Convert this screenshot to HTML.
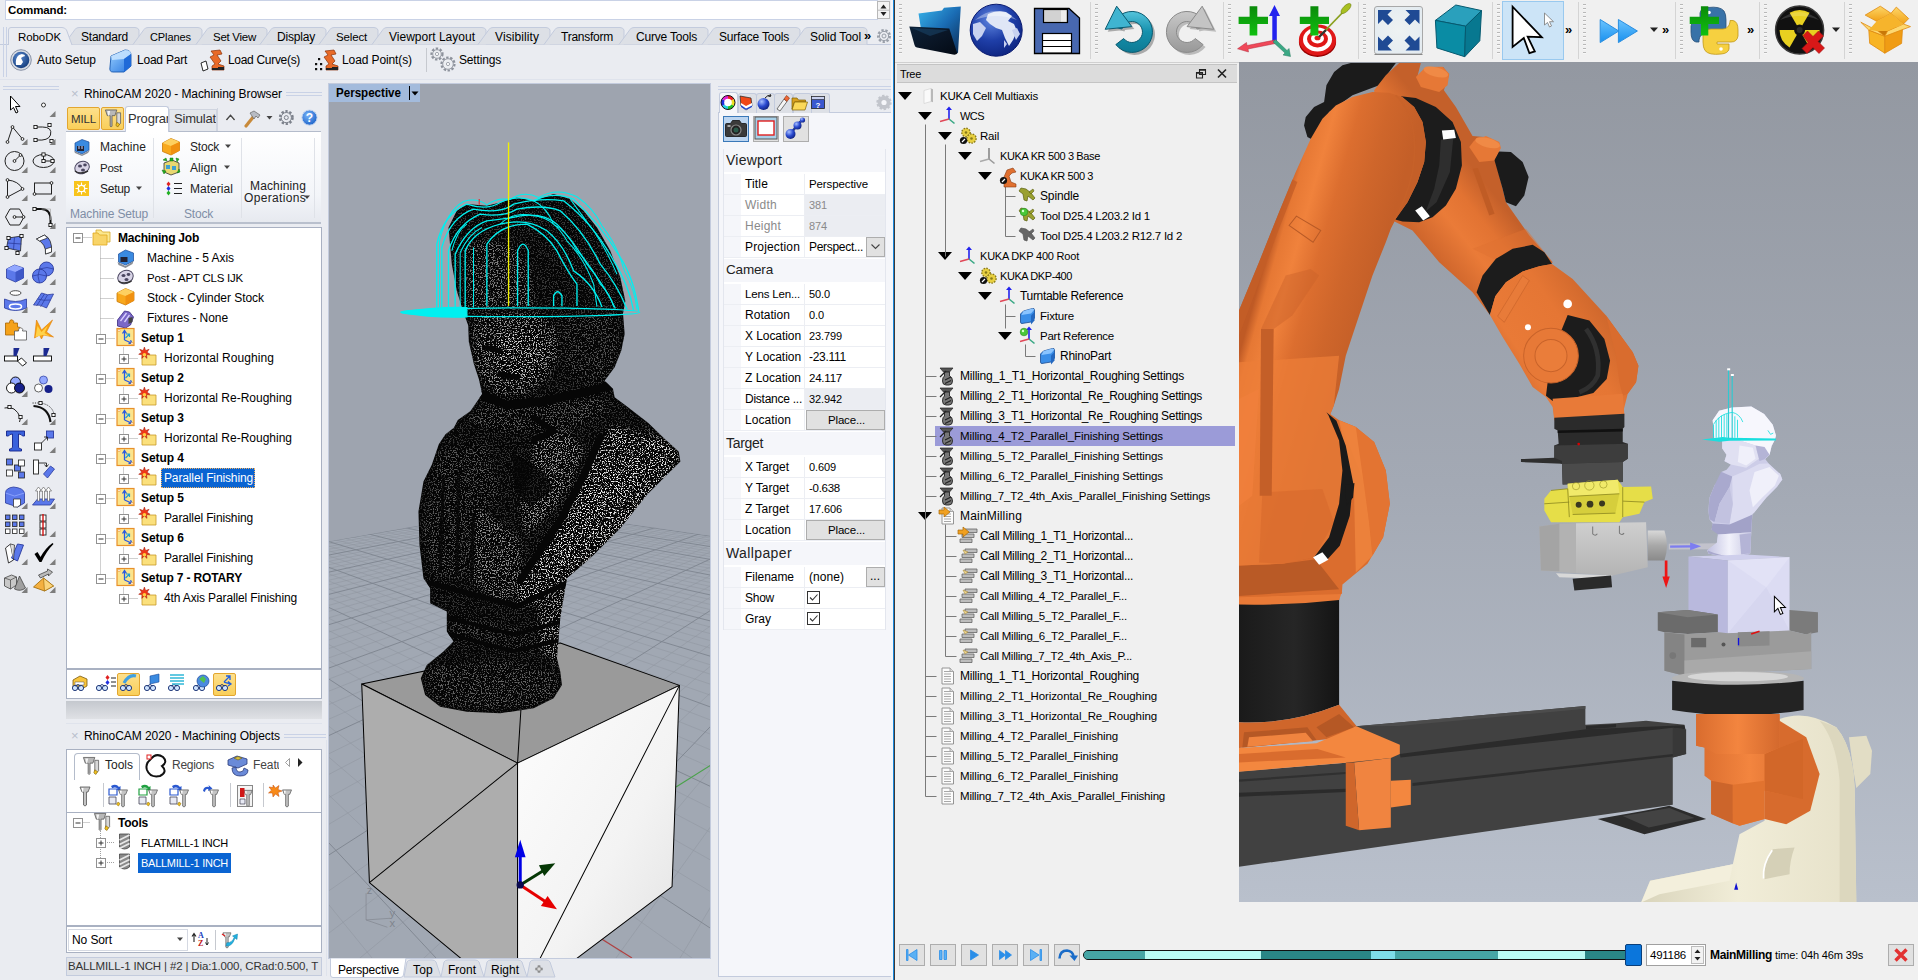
<!DOCTYPE html>
<html><head><meta charset="utf-8"><title>RhinoCAM RoboDK</title>
<style>
html,body{margin:0;padding:0}
body{width:1918px;height:980px;position:relative;overflow:hidden;background:#eaecf1;font-family:"Liberation Sans",sans-serif;font-size:12px;color:#000}
.t{position:absolute;white-space:nowrap;display:block}
.r{position:absolute;display:block}
svg{overflow:hidden}
</style></head><body>
<div class="r" style="left:5px;top:0px;width:873px;height:20px;background:#fff;border:1px solid #c9d2e6;box-sizing:border-box;"></div>
<span class="t" style="left:8px;top:2px;line-height:16px;font-size:11.5px;letter-spacing:-0.132px;font-weight:bold;">Command:</span>
<div class="r" style="left:877px;top:1px;width:13px;height:18px;background:#f4f4f4;border:1px solid #b8b8b8;box-sizing:border-box;"></div>
<svg class="r" style="left:877px;top:1px" width="13" height="18"><path d="M3.5 7.5 L6.5 3.5 L9.5 7.5Z M3.5 11 L6.5 15 L9.5 11Z" fill="#222"/><path d="M1 9.2H12" stroke="#b8b8b8" stroke-width="1"/></svg>
<svg class="r" style="left:0;top:24px" width="893" height="24"><path d="M0 20.5H893" stroke="#c3cbdd" stroke-width="1"/><path d="M64 20.5 L75 5.5 Q76 3.5 79 3.5 L135 3.5 Q138 3.5 139 6 L139 20.5" fill="#dde0e6" stroke="#c3cbdd"/><path d="M133 20.5 L144 5.5 Q145 3.5 148 3.5 L198 3.5 Q201 3.5 202 6 L202 20.5" fill="#dde0e6" stroke="#c3cbdd"/><path d="M196 20.5 L207 5.5 Q208 3.5 211 3.5 L263 3.5 Q266 3.5 267 6 L267 20.5" fill="#dde0e6" stroke="#c3cbdd"/><path d="M260 20.5 L271 5.5 Q272 3.5 275 3.5 L322 3.5 Q325 3.5 326 6 L326 20.5" fill="#dde0e6" stroke="#c3cbdd"/><path d="M319 20.5 L330 5.5 Q331 3.5 334 3.5 L374 3.5 Q377 3.5 378 6 L378 20.5" fill="#dde0e6" stroke="#c3cbdd"/><path d="M372 20.5 L383 5.5 Q384 3.5 387 3.5 L482 3.5 Q485 3.5 486 6 L486 20.5" fill="#dde0e6" stroke="#c3cbdd"/><path d="M478 20.5 L489 5.5 Q490 3.5 493 3.5 L546 3.5 Q549 3.5 550 6 L550 20.5" fill="#dde0e6" stroke="#c3cbdd"/><path d="M544 20.5 L555 5.5 Q556 3.5 559 3.5 L620 3.5 Q623 3.5 624 6 L624 20.5" fill="#dde0e6" stroke="#c3cbdd"/><path d="M619 20.5 L630 5.5 Q631 3.5 634 3.5 L704 3.5 Q707 3.5 708 6 L708 20.5" fill="#dde0e6" stroke="#c3cbdd"/><path d="M702 20.5 L713 5.5 Q714 3.5 717 3.5 L796 3.5 Q799 3.5 800 6 L800 20.5" fill="#dde0e6" stroke="#c3cbdd"/><path d="M793 20.5 L804 5.5 Q805 3.5 808 3.5 L863 3.5 Q866 3.5 867 6 L867 20.5" fill="#dde0e6" stroke="#c3cbdd"/><path d="M8.5 21 L8.5 6 Q8.5 3.5 11 3.5 L62 3.5 Q65 3.5 66.5 6 L72 21" fill="#eaecf1" stroke="#c3cbdd"/></svg>
<span class="t" style="left:18px;top:28.5px;line-height:16px;font-size:11.5px;letter-spacing:-0.078px;">RoboDK</span>
<span class="t" style="left:81px;top:28.5px;line-height:16px;font-size:12px;letter-spacing:-0.213px;">Standard</span>
<span class="t" style="left:150px;top:28.5px;line-height:16px;font-size:11px;letter-spacing:-0.082px;">CPlanes</span>
<span class="t" style="left:213px;top:28.5px;line-height:16px;font-size:11.5px;letter-spacing:-0.272px;">Set View</span>
<span class="t" style="left:277px;top:28.5px;line-height:16px;font-size:12px;letter-spacing:-0.192px;">Display</span>
<span class="t" style="left:336px;top:28.5px;line-height:16px;font-size:11.5px;letter-spacing:-0.160px;">Select</span>
<span class="t" style="left:389px;top:28.5px;line-height:16px;font-size:12px;letter-spacing:0.011px;">Viewport Layout</span>
<span class="t" style="left:495px;top:28.5px;line-height:16px;font-size:12px;letter-spacing:0.088px;">Visibility</span>
<span class="t" style="left:561px;top:28.5px;line-height:16px;font-size:12px;letter-spacing:-0.248px;">Transform</span>
<span class="t" style="left:636px;top:28.5px;line-height:16px;font-size:12px;letter-spacing:-0.194px;">Curve Tools</span>
<span class="t" style="left:719px;top:28.5px;line-height:16px;font-size:12px;letter-spacing:-0.191px;">Surface Tools</span>
<span class="t" style="left:810px;top:28.5px;line-height:16px;font-size:12px;letter-spacing:-0.081px;">Solid Tool</span>
<span class="t" style="left:864px;top:27px;line-height:17px;font-size:13px;font-weight:bold;">»</span>
<span class="t" style="left:37px;top:52px;line-height:16px;font-size:12px;letter-spacing:-0.038px;">Auto Setup</span>
<span class="t" style="left:137px;top:52px;line-height:16px;font-size:12px;letter-spacing:-0.226px;">Load Part</span>
<span class="t" style="left:228px;top:52px;line-height:16px;font-size:12px;letter-spacing:-0.310px;">Load Curve(s)</span>
<span class="t" style="left:342px;top:52px;line-height:16px;font-size:12px;letter-spacing:-0.106px;">Load Point(s)</span>
<span class="t" style="left:459px;top:52px;line-height:16px;font-size:12px;letter-spacing:-0.170px;">Settings</span>
<div class="r" style="left:426px;top:48px;width:1px;height:24px;background:#c6c9cf;"></div>
<div class="r" style="left:3px;top:27px;width:1px;height:50px;background:#c9d2e6;"></div>
<div class="r" style="left:6px;top:27px;width:1px;height:50px;background:#c9d2e6;"></div>
<div class="r" style="left:0px;top:79px;width:893px;height:1px;background:#dfe3ec;"></div>
<div class="r" style="left:3px;top:86px;width:56px;height:1px;background:#c9d2e6;"></div>
<div class="r" style="left:3px;top:89px;width:56px;height:1px;background:#c9d2e6;"></div>
<span class="t" style="left:71px;top:85px;line-height:17px;font-size:13px;color:#b9bfcc;">×</span>
<span class="t" style="left:84px;top:85.5px;line-height:16px;font-size:12px;letter-spacing:-0.083px;">RhinoCAM 2020 - Machining Browser</span>
<div class="r" style="left:286px;top:92px;width:36px;height:1px;background:#c9d2e6;"></div>
<div class="r" style="left:286px;top:95px;width:36px;height:1px;background:#c9d2e6;"></div>
<div class="r" style="left:66px;top:131px;width:255px;height:1px;background:#b4bccb;"></div>
<div class="r" style="left:67px;top:107px;width:33px;height:23px;background:linear-gradient(#fde08c,#f9cf5a);border:1px solid #e3a62f;box-sizing:border-box;border-radius:2px"></div>
<span class="t" style="left:71px;top:111px;line-height:16px;font-size:11.5px;letter-spacing:-0.141px;color:#333;">MILL</span>
<div class="r" style="left:101px;top:107px;width:23px;height:23px;background:linear-gradient(#fde08c,#f9cf5a);border:1px solid #e3a62f;box-sizing:border-box;border-radius:2px"></div>
<div class="r" style="left:125px;top:106px;width:44px;height:26px;background:#fff;border:1px solid #c3cbdd;box-sizing:border-box;border-bottom:none;border-radius:3px 3px 0 0"></div>
<span class="t" style="left:128px;top:111px;width:40px;overflow:hidden;line-height:16px;font-size:13px;color:#333;letter-spacing:-0.2px">Program</span>
<div class="r" style="left:169px;top:109px;width:48px;height:22px;background:#e4e7ec;border:1px solid #d0d5e0;box-sizing:border-box;border-bottom:none"></div>
<span class="t" style="left:174px;top:111px;width:42px;overflow:hidden;line-height:16px;font-size:13px;color:#333;letter-spacing:-0.2px">Simulate</span>
<div class="r" style="left:217px;top:108px;width:1px;height:23px;background:#d0d5e0;"></div>
<div class="r" style="left:66px;top:132px;width:255px;height:91px;background:linear-gradient(#fff,#f3f5f9 70%,#e6e9ef);"></div>
<div class="r" style="left:153px;top:138px;width:1px;height:80px;background:#dfe2e8;"></div>
<div class="r" style="left:241px;top:138px;width:1px;height:80px;background:#dfe2e8;"></div>
<div class="r" style="left:314px;top:138px;width:1px;height:80px;background:#dfe2e8;"></div>
<div class="r" style="left:66px;top:222px;width:255px;height:2px;background:#b9c0cd;"></div>
<span class="t" style="left:100px;top:139px;line-height:16px;font-size:12px;letter-spacing:0.092px;color:#222;">Machine</span>
<span class="t" style="left:100px;top:160px;line-height:16px;font-size:11.5px;letter-spacing:-0.253px;color:#222;">Post</span>
<span class="t" style="left:100px;top:181px;line-height:16px;font-size:12px;letter-spacing:-0.272px;color:#222;">Setup</span>
<span class="t" style="left:190px;top:139px;line-height:16px;font-size:12px;letter-spacing:-0.202px;color:#222;">Stock</span>
<span class="t" style="left:190px;top:160px;line-height:16px;font-size:12px;letter-spacing:0.063px;color:#222;">Align</span>
<span class="t" style="left:190px;top:181px;line-height:16px;font-size:12px;letter-spacing:0.040px;color:#222;">Material</span>
<span class="t" style="left:70px;top:205.5px;line-height:16px;font-size:12px;letter-spacing:-0.158px;color:#7f8ea6;">Machine Setup</span>
<span class="t" style="left:184px;top:205.5px;line-height:16px;font-size:12px;letter-spacing:-0.202px;color:#7f8ea6;">Stock</span>
<span class="t" style="left:250px;top:177.5px;line-height:16px;font-size:12px;letter-spacing:0.145px;color:#222;">Machining</span>
<span class="t" style="left:244px;top:189.5px;line-height:16px;font-size:12px;letter-spacing:0.330px;color:#222;">Operations</span>
<svg class="r" style="left:136px;top:186px" width="7" height="5"><path d="M0 .5H6L3 4Z" fill="#444"/></svg>
<svg class="r" style="left:225px;top:144px" width="7" height="5"><path d="M0 .5H6L3 4Z" fill="#444"/></svg>
<svg class="r" style="left:224px;top:165px" width="7" height="5"><path d="M0 .5H6L3 4Z" fill="#444"/></svg>
<svg class="r" style="left:304px;top:195px" width="7" height="5"><path d="M0 .5H6L3 4Z" fill="#444"/></svg>
<div class="r" style="left:66px;top:227px;width:256px;height:442px;background:#fff;border:1px solid #a9b1c2;box-sizing:border-box;"></div>
<span class="t" style="left:118px;top:230px;line-height:16px;font-size:12px;letter-spacing:-0.231px;font-weight:bold;">Machining Job</span>
<span class="t" style="left:147px;top:250px;line-height:16px;font-size:12px;letter-spacing:-0.065px;">Machine - 5 Axis</span>
<span class="t" style="left:147px;top:270px;line-height:16px;font-size:11.5px;letter-spacing:-0.230px;">Post - APT CLS IJK</span>
<span class="t" style="left:147px;top:290px;line-height:16px;font-size:12px;letter-spacing:-0.047px;">Stock - Cylinder Stock</span>
<span class="t" style="left:147px;top:310px;line-height:16px;font-size:12px;letter-spacing:-0.068px;">Fixtures - None</span>
<span class="t" style="left:141px;top:330px;line-height:16px;font-size:12px;letter-spacing:-0.049px;font-weight:bold;">Setup 1</span>
<span class="t" style="left:164px;top:350px;line-height:16px;font-size:12px;letter-spacing:0.067px;">Horizontal Roughing</span>
<span class="t" style="left:141px;top:370px;line-height:16px;font-size:12px;letter-spacing:-0.049px;font-weight:bold;">Setup 2</span>
<span class="t" style="left:164px;top:390px;line-height:16px;font-size:12px;letter-spacing:-0.003px;">Horizontal Re-Roughing</span>
<span class="t" style="left:141px;top:410px;line-height:16px;font-size:12px;letter-spacing:-0.049px;font-weight:bold;">Setup 3</span>
<span class="t" style="left:164px;top:430px;line-height:16px;font-size:12px;letter-spacing:-0.003px;">Horizontal Re-Roughing</span>
<span class="t" style="left:141px;top:450px;line-height:16px;font-size:12px;letter-spacing:-0.049px;font-weight:bold;">Setup 4</span>
<div class="r" style="left:161px;top:468px;width:94px;height:20px;background:#0a64d2;border:1px dotted #f0b060;box-sizing:border-box;"></div>
<span class="t" style="left:164px;top:470px;line-height:16px;font-size:12px;letter-spacing:-0.132px;color:#fff;">Parallel Finishing</span>
<span class="t" style="left:141px;top:490px;line-height:16px;font-size:12px;letter-spacing:-0.049px;font-weight:bold;">Setup 5</span>
<span class="t" style="left:164px;top:510px;line-height:16px;font-size:12px;letter-spacing:-0.132px;">Parallel Finishing</span>
<span class="t" style="left:141px;top:530px;line-height:16px;font-size:12px;letter-spacing:-0.049px;font-weight:bold;">Setup 6</span>
<span class="t" style="left:164px;top:550px;line-height:16px;font-size:12px;letter-spacing:-0.132px;">Parallel Finishing</span>
<span class="t" style="left:141px;top:570px;line-height:16px;font-size:12px;letter-spacing:-0.146px;font-weight:bold;">Setup 7 - ROTARY</span>
<span class="t" style="left:164px;top:590px;line-height:16px;font-size:12px;letter-spacing:-0.138px;">4th Axis Parallel Finishing</span>
<svg class="r" style="left:66px;top:227px" width="256" height="442"><g stroke="#a0a0a0" stroke-width="1" stroke-dasharray="1 1" fill="none"><path d="M16.5 10.5L25.5 10.5"/><path d="M34.5 19.5L34.5 350.5"/><path d="M34.5 31.5L48.5 31.5"/><path d="M34.5 51.5L48.5 51.5"/><path d="M34.5 71.5L48.5 71.5"/><path d="M34.5 91.5L48.5 91.5"/><path d="M39.5 111.5L48.5 111.5"/><path d="M57.5 120.5L57.5 131.5"/><path d="M62.5 131.5L71.5 131.5"/><path d="M39.5 151.5L48.5 151.5"/><path d="M57.5 160.5L57.5 171.5"/><path d="M62.5 171.5L71.5 171.5"/><path d="M39.5 191.5L48.5 191.5"/><path d="M57.5 200.5L57.5 211.5"/><path d="M62.5 211.5L71.5 211.5"/><path d="M39.5 231.5L48.5 231.5"/><path d="M57.5 240.5L57.5 251.5"/><path d="M62.5 251.5L71.5 251.5"/><path d="M39.5 271.5L48.5 271.5"/><path d="M57.5 280.5L57.5 291.5"/><path d="M62.5 291.5L71.5 291.5"/><path d="M39.5 311.5L48.5 311.5"/><path d="M57.5 320.5L57.5 331.5"/><path d="M62.5 331.5L71.5 331.5"/><path d="M39.5 351.5L48.5 351.5"/><path d="M57.5 360.5L57.5 371.5"/><path d="M62.5 371.5L71.5 371.5"/></g><rect x="7.5" y="6.5" width="9" height="9" fill="#fff" stroke="#919191"/><path d="M9.5 11h5" stroke="#333"/><rect x="30.5" y="107.5" width="9" height="9" fill="#fff" stroke="#919191"/><path d="M32.5 112h5" stroke="#333"/><rect x="53.5" y="127.5" width="9" height="9" fill="#fff" stroke="#919191"/><path d="M55.5 132h5" stroke="#333"/><path d="M58 129.5v5" stroke="#333"/><rect x="30.5" y="147.5" width="9" height="9" fill="#fff" stroke="#919191"/><path d="M32.5 152h5" stroke="#333"/><rect x="53.5" y="167.5" width="9" height="9" fill="#fff" stroke="#919191"/><path d="M55.5 172h5" stroke="#333"/><path d="M58 169.5v5" stroke="#333"/><rect x="30.5" y="187.5" width="9" height="9" fill="#fff" stroke="#919191"/><path d="M32.5 192h5" stroke="#333"/><rect x="53.5" y="207.5" width="9" height="9" fill="#fff" stroke="#919191"/><path d="M55.5 212h5" stroke="#333"/><path d="M58 209.5v5" stroke="#333"/><rect x="30.5" y="227.5" width="9" height="9" fill="#fff" stroke="#919191"/><path d="M32.5 232h5" stroke="#333"/><rect x="53.5" y="247.5" width="9" height="9" fill="#fff" stroke="#919191"/><path d="M55.5 252h5" stroke="#333"/><path d="M58 249.5v5" stroke="#333"/><rect x="30.5" y="267.5" width="9" height="9" fill="#fff" stroke="#919191"/><path d="M32.5 272h5" stroke="#333"/><rect x="53.5" y="287.5" width="9" height="9" fill="#fff" stroke="#919191"/><path d="M55.5 292h5" stroke="#333"/><path d="M58 289.5v5" stroke="#333"/><rect x="30.5" y="307.5" width="9" height="9" fill="#fff" stroke="#919191"/><path d="M32.5 312h5" stroke="#333"/><rect x="53.5" y="327.5" width="9" height="9" fill="#fff" stroke="#919191"/><path d="M55.5 332h5" stroke="#333"/><path d="M58 329.5v5" stroke="#333"/><rect x="30.5" y="347.5" width="9" height="9" fill="#fff" stroke="#919191"/><path d="M32.5 352h5" stroke="#333"/><rect x="53.5" y="367.5" width="9" height="9" fill="#fff" stroke="#919191"/><path d="M55.5 372h5" stroke="#333"/><path d="M58 369.5v5" stroke="#333"/></svg>
<div class="r" style="left:66px;top:669px;width:256px;height:30px;background:#fff;border:1px solid #a9b1c2;box-sizing:border-box;"></div>
<div class="r" style="left:117px;top:673px;width:23px;height:23px;background:linear-gradient(#fde08c,#f9cf5a);border:1px solid #e3a62f;box-sizing:border-box;border-radius:2px"></div>
<div class="r" style="left:213px;top:673px;width:23px;height:23px;background:linear-gradient(#fde08c,#f9cf5a);border:1px solid #e3a62f;box-sizing:border-box;border-radius:2px"></div>
<div class="r" style="left:66px;top:701px;width:256px;height:18px;background:linear-gradient(#c4c8ce,#dfe1e5);"></div>
<div class="r" style="left:66px;top:723px;width:256px;height:1px;background:#dfe3ec;"></div>
<span class="t" style="left:71px;top:727px;line-height:17px;font-size:13px;color:#b9bfcc;">×</span>
<span class="t" style="left:84px;top:727.5px;line-height:16px;font-size:12px;letter-spacing:-0.043px;">RhinoCAM 2020 - Machining Objects</span>
<div class="r" style="left:284px;top:734px;width:42px;height:1px;background:#c9d2e6;"></div>
<div class="r" style="left:284px;top:737px;width:42px;height:1px;background:#c9d2e6;"></div>
<div class="r" style="left:66px;top:749px;width:256px;height:64px;background:#fff;border:1px solid #a9b1c2;box-sizing:border-box;"></div>
<div class="r" style="left:74px;top:753px;width:66px;height:27px;background:#fff;border:1px solid #b4bccb;box-sizing:border-box;border-bottom:none;border-radius:4px 4px 0 0"></div>
<span class="t" style="left:105px;top:757px;line-height:16px;font-size:12px;letter-spacing:-0.002px;color:#222;">Tools</span>
<span class="t" style="left:172px;top:757px;line-height:16px;font-size:12px;letter-spacing:-0.289px;color:#444;">Regions</span>
<span class="t" style="left:253px;top:757px;width:26px;overflow:hidden;line-height:16px;color:#444;letter-spacing:-0.1px">Features</span>
<svg class="r" style="left:282px;top:757px" width="24" height="12"><path d="M7.5 1.5v8L3.5 5.5Z" fill="#fff" stroke="#888" stroke-width=".8"/><path d="M16 1v9L20.5 5.5Z" fill="#222"/></svg>
<div class="r" style="left:103px;top:783px;width:1px;height:24px;background:#c6c9cf;"></div>
<div class="r" style="left:230px;top:783px;width:1px;height:24px;background:#c6c9cf;"></div>
<div class="r" style="left:263px;top:783px;width:1px;height:24px;background:#c6c9cf;"></div>
<div class="r" style="left:66px;top:812px;width:256px;height:114px;background:#fff;border:1px solid #a9b1c2;box-sizing:border-box;"></div>
<span class="t" style="left:118px;top:814.5px;line-height:16px;font-size:12px;letter-spacing:-0.221px;font-weight:bold;">Tools</span>
<span class="t" style="left:141px;top:834.5px;line-height:16px;font-size:11px;letter-spacing:-0.217px;">FLATMILL-1 INCH</span>
<div class="r" style="left:138px;top:853px;width:93px;height:20px;background:#0a64d2;"></div>
<span class="t" style="left:141px;top:854.5px;line-height:16px;font-size:11px;letter-spacing:-0.272px;color:#fff;">BALLMILL-1 INCH</span>
<svg class="r" style="left:66px;top:812px" width="256" height="114"><g stroke="#a0a0a0" stroke-dasharray="1 1"><path d="M16.5 10.5H24 M34.5 19V50.5 M39 30.5H48 M39 50.5H48"/></g><rect x="7.5" y="6.5" width="9" height="9" fill="#fff" stroke="#919191"/><path d="M9.5 11h5" stroke="#333"/><rect x="30.5" y="26.5" width="9" height="9" fill="#fff" stroke="#919191"/><path d="M32.5 31h5" stroke="#333"/><path d="M35 28.5v5" stroke="#333"/><rect x="30.5" y="46.5" width="9" height="9" fill="#fff" stroke="#919191"/><path d="M32.5 51h5" stroke="#333"/><path d="M35 48.5v5" stroke="#333"/></svg>
<div class="r" style="left:66px;top:926px;width:256px;height:27px;background:#fff;border:1px solid #a9b1c2;box-sizing:border-box;"></div>
<div class="r" style="left:68px;top:929px;width:120px;height:22px;background:#fff;border:1px solid #d5d9e2;box-sizing:border-box;"></div>
<span class="t" style="left:72px;top:931.5px;line-height:16px;font-size:12px;letter-spacing:-0.098px;">No Sort</span>
<svg class="r" style="left:177px;top:937px" width="7" height="5"><path d="M0 .5H6L3 4Z" fill="#444"/></svg>
<div class="r" style="left:215px;top:930px;width:1px;height:20px;background:#c6c9cf;"></div>
<div class="r" style="left:66px;top:957px;width:256px;height:19px;background:#dfe2e8;border:1px solid #c3cbdd;box-sizing:border-box;"></div>
<span class="t" style="left:68px;top:958px;line-height:16px;font-size:11.5px;letter-spacing:-0.148px;color:#333;">BALLMILL-1 INCH | #2 | Dia:1.000, CRad:0.500, T</span>
<div class="r" style="left:326px;top:740px;width:1px;height:236px;background:#dfe3ec;"></div>
<div class="r" style="left:328px;top:83px;width:383px;height:876px;background:#9ea4af;border:1px solid #c3cbdd;box-sizing:border-box;"></div>
<svg class="r" style="left:328px;top:958px" width="240" height="22"><path d="M0 .5H240" stroke="#c3cbdd"/><path d="M76 19 L79 4 Q80 2 83 2 H104 Q107 2 108 4 L113 19Z M113 19 L116 4 Q117 2 120 2 H147 Q150 2 151 4 L156 19Z M156 19 L159 4 Q160 2 163 2 H190 Q193 2 194 4 L199 19Z M199 19 L202 4 Q203 2 206 2 H218 Q221 2 222 4 L227 19Z" fill="#dde0e6" stroke="#c3cbdd"/><path d="M2.5 0 V17 Q2.5 19.500 5 19.500 H72 Q75 19.500 75.500 17 L78 0Z" fill="#fff" stroke="#c3cbdd"/><path d="M207.5 11h7m-3.500 -3.500v7" stroke="#666" stroke-width="2.6"/><path d="M208.500 11h5m-2.500 -2.500v5" stroke="#fff" stroke-width="1"/></svg>
<span class="t" style="left:338px;top:961.5px;line-height:16px;font-size:12px;letter-spacing:-0.154px;">Perspective</span>
<span class="t" style="left:413px;top:961.5px;line-height:16px;font-size:12px;letter-spacing:0.218px;">Top</span>
<span class="t" style="left:448px;top:961.5px;line-height:16px;font-size:12px;letter-spacing:-0.002px;">Front</span>
<span class="t" style="left:491px;top:961.5px;line-height:16px;font-size:12px;letter-spacing:-0.002px;">Right</span>
<div class="r" style="left:718px;top:86px;width:173px;height:1px;background:#c9d2e6;"></div>
<div class="r" style="left:718px;top:89px;width:173px;height:1px;background:#c9d2e6;"></div>
<div class="r" style="left:718px;top:112px;width:173px;height:865px;background:#f5f6fa;border:1px solid #c3cbdd;box-sizing:border-box;border-right:none"></div>
<div class="r" style="left:719px;top:92px;width:19px;height:21px;background:#f5f6fa;border:1px solid #c3cbdd;box-sizing:border-box;border-bottom:none;border-radius:3px 3px 0 0"></div>
<div class="r" style="left:738px;top:93px;width:19px;height:20px;background:#dde0e6;border:1px solid #c3cbdd;box-sizing:border-box;border-bottom:none;border-radius:3px 3px 0 0"></div>
<div class="r" style="left:756px;top:93px;width:19px;height:20px;background:#dde0e6;border:1px solid #c3cbdd;box-sizing:border-box;border-bottom:none;border-radius:3px 3px 0 0"></div>
<div class="r" style="left:774px;top:93px;width:19px;height:20px;background:#dde0e6;border:1px solid #c3cbdd;box-sizing:border-box;border-bottom:none;border-radius:3px 3px 0 0"></div>
<div class="r" style="left:793px;top:93px;width:19px;height:20px;background:#dde0e6;border:1px solid #c3cbdd;box-sizing:border-box;border-bottom:none;border-radius:3px 3px 0 0"></div>
<div class="r" style="left:811px;top:93px;width:19px;height:20px;background:#dde0e6;border:1px solid #c3cbdd;box-sizing:border-box;border-bottom:none;border-radius:3px 3px 0 0"></div>
<div class="r" style="left:723px;top:116px;width:26px;height:26px;background:#bcd5f0;border:1px solid #3a78b8;box-sizing:border-box;"></div>
<div class="r" style="left:753px;top:116px;width:26px;height:26px;background:#e1e1e1;border:1px solid #adadad;box-sizing:border-box;"></div>
<div class="r" style="left:783px;top:116px;width:26px;height:26px;background:#e1e1e1;border:1px solid #adadad;box-sizing:border-box;"></div>
<div class="r" style="left:723px;top:149px;width:163px;height:481px;background:#fff;border:1px solid #e3e6ee;box-sizing:border-box;"></div>
<div class="r" style="left:724px;top:149px;width:161px;height:23px;background:#f5f6fa;"></div>
<span class="t" style="left:726px;top:151px;line-height:18px;font-size:14px;letter-spacing:0.223px;color:#222;">Viewport</span>
<div class="r" style="left:724px;top:259px;width:161px;height:23px;background:#f5f6fa;"></div>
<span class="t" style="left:726px;top:261px;line-height:18px;font-size:13.5px;letter-spacing:-0.169px;color:#222;">Camera</span>
<div class="r" style="left:724px;top:432px;width:161px;height:23px;background:#f5f6fa;"></div>
<span class="t" style="left:726px;top:434px;line-height:18px;font-size:14px;letter-spacing:-0.318px;color:#222;">Target</span>
<div class="r" style="left:724px;top:542px;width:161px;height:23px;background:#f5f6fa;"></div>
<span class="t" style="left:726px;top:544px;line-height:18px;font-size:14px;letter-spacing:0.388px;color:#222;">Wallpaper</span>
<div class="r" style="left:724px;top:174px;width:17px;height:20px;background:#f5f6fa;"></div>
<div class="r" style="left:724px;top:194px;width:161px;height:1px;background:#eceef3;"></div>
<div class="r" style="left:804px;top:174px;width:1px;height:20px;background:#eceef3;"></div>
<span class="t" style="left:745px;top:176px;line-height:16px;font-size:12px;letter-spacing:0.155px;">Title</span>
<span class="t" style="left:809px;top:176px;line-height:16px;font-size:11.5px;letter-spacing:-0.098px;">Perspective</span>
<div class="r" style="left:724px;top:195px;width:17px;height:20px;background:#f5f6fa;"></div>
<div class="r" style="left:724px;top:215px;width:161px;height:1px;background:#eceef3;"></div>
<div class="r" style="left:804px;top:195px;width:1px;height:20px;background:#eceef3;"></div>
<div class="r" style="left:805px;top:195px;width:80px;height:20px;background:#ebedf2;"></div>
<span class="t" style="left:745px;top:197px;line-height:16px;font-size:12px;letter-spacing:0.265px;color:#8a8a8a;">Width</span>
<span class="t" style="left:809px;top:197px;line-height:16px;font-size:11px;letter-spacing:-0.117px;color:#8a8a8a;">381</span>
<div class="r" style="left:724px;top:216px;width:17px;height:20px;background:#f5f6fa;"></div>
<div class="r" style="left:724px;top:236px;width:161px;height:1px;background:#eceef3;"></div>
<div class="r" style="left:804px;top:216px;width:1px;height:20px;background:#eceef3;"></div>
<div class="r" style="left:805px;top:216px;width:80px;height:20px;background:#ebedf2;"></div>
<span class="t" style="left:745px;top:218px;line-height:16px;font-size:12px;letter-spacing:0.219px;color:#8a8a8a;">Height</span>
<span class="t" style="left:809px;top:218px;line-height:16px;font-size:11px;letter-spacing:-0.117px;color:#8a8a8a;">874</span>
<div class="r" style="left:724px;top:237px;width:17px;height:20px;background:#f5f6fa;"></div>
<div class="r" style="left:724px;top:257px;width:161px;height:1px;background:#eceef3;"></div>
<div class="r" style="left:804px;top:237px;width:1px;height:20px;background:#eceef3;"></div>
<span class="t" style="left:745px;top:239px;line-height:16px;font-size:12px;letter-spacing:0.164px;">Projection</span>
<span class="t" style="left:809px;top:239px;line-height:16px;font-size:12px;letter-spacing:-0.305px;">Perspect...</span>
<div class="r" style="left:724px;top:284px;width:17px;height:20px;background:#f5f6fa;"></div>
<div class="r" style="left:724px;top:304px;width:161px;height:1px;background:#eceef3;"></div>
<div class="r" style="left:804px;top:284px;width:1px;height:20px;background:#eceef3;"></div>
<span class="t" style="left:745px;top:286px;line-height:16px;font-size:11.5px;letter-spacing:-0.173px;">Lens Len...</span>
<span class="t" style="left:809px;top:286px;line-height:16px;font-size:11px;letter-spacing:-0.102px;">50.0</span>
<div class="r" style="left:724px;top:305px;width:17px;height:20px;background:#f5f6fa;"></div>
<div class="r" style="left:724px;top:325px;width:161px;height:1px;background:#eceef3;"></div>
<div class="r" style="left:804px;top:305px;width:1px;height:20px;background:#eceef3;"></div>
<span class="t" style="left:745px;top:307px;line-height:16px;font-size:12px;letter-spacing:0.038px;">Rotation</span>
<span class="t" style="left:809px;top:307px;line-height:16px;font-size:11px;letter-spacing:-0.097px;">0.0</span>
<div class="r" style="left:724px;top:326px;width:17px;height:20px;background:#f5f6fa;"></div>
<div class="r" style="left:724px;top:346px;width:161px;height:1px;background:#eceef3;"></div>
<div class="r" style="left:804px;top:326px;width:1px;height:20px;background:#eceef3;"></div>
<span class="t" style="left:745px;top:328px;line-height:16px;font-size:12px;letter-spacing:-0.071px;">X Location</span>
<span class="t" style="left:809px;top:328px;line-height:16px;font-size:11px;letter-spacing:-0.107px;">23.799</span>
<div class="r" style="left:724px;top:347px;width:17px;height:20px;background:#f5f6fa;"></div>
<div class="r" style="left:724px;top:367px;width:161px;height:1px;background:#eceef3;"></div>
<div class="r" style="left:804px;top:347px;width:1px;height:20px;background:#eceef3;"></div>
<span class="t" style="left:745px;top:349px;line-height:16px;font-size:12px;letter-spacing:-0.049px;">Y Location</span>
<span class="t" style="left:809px;top:349px;line-height:16px;font-size:12px;letter-spacing:-0.274px;">-23.111</span>
<div class="r" style="left:724px;top:368px;width:17px;height:20px;background:#f5f6fa;"></div>
<div class="r" style="left:724px;top:388px;width:161px;height:1px;background:#eceef3;"></div>
<div class="r" style="left:804px;top:368px;width:1px;height:20px;background:#eceef3;"></div>
<span class="t" style="left:745px;top:370px;line-height:16px;font-size:12px;letter-spacing:-0.003px;">Z Location</span>
<span class="t" style="left:809px;top:370px;line-height:16px;font-size:11.5px;letter-spacing:-0.220px;">24.117</span>
<div class="r" style="left:724px;top:389px;width:17px;height:20px;background:#f5f6fa;"></div>
<div class="r" style="left:724px;top:409px;width:161px;height:1px;background:#eceef3;"></div>
<div class="r" style="left:804px;top:389px;width:1px;height:20px;background:#eceef3;"></div>
<div class="r" style="left:805px;top:389px;width:80px;height:20px;background:#ebedf2;"></div>
<span class="t" style="left:745px;top:391px;line-height:16px;font-size:12px;letter-spacing:-0.252px;">Distance ...</span>
<span class="t" style="left:809px;top:391px;line-height:16px;font-size:11px;letter-spacing:-0.107px;">32.942</span>
<div class="r" style="left:724px;top:410px;width:17px;height:20px;background:#f5f6fa;"></div>
<div class="r" style="left:724px;top:430px;width:161px;height:1px;background:#eceef3;"></div>
<div class="r" style="left:804px;top:410px;width:1px;height:20px;background:#eceef3;"></div>
<span class="t" style="left:745px;top:412px;line-height:16px;font-size:12px;letter-spacing:0.079px;">Location</span>
<div class="r" style="left:724px;top:457px;width:17px;height:20px;background:#f5f6fa;"></div>
<div class="r" style="left:724px;top:477px;width:161px;height:1px;background:#eceef3;"></div>
<div class="r" style="left:804px;top:457px;width:1px;height:20px;background:#eceef3;"></div>
<span class="t" style="left:745px;top:459px;line-height:16px;font-size:12px;letter-spacing:-0.059px;">X Target</span>
<span class="t" style="left:809px;top:459px;line-height:16px;font-size:11px;letter-spacing:-0.105px;">0.609</span>
<div class="r" style="left:724px;top:478px;width:17px;height:20px;background:#f5f6fa;"></div>
<div class="r" style="left:724px;top:498px;width:161px;height:1px;background:#eceef3;"></div>
<div class="r" style="left:804px;top:478px;width:1px;height:20px;background:#eceef3;"></div>
<span class="t" style="left:745px;top:480px;line-height:16px;font-size:12px;letter-spacing:-0.032px;">Y Target</span>
<span class="t" style="left:809px;top:480px;line-height:16px;font-size:11.5px;letter-spacing:-0.268px;">-0.638</span>
<div class="r" style="left:724px;top:499px;width:17px;height:20px;background:#f5f6fa;"></div>
<div class="r" style="left:724px;top:519px;width:161px;height:1px;background:#eceef3;"></div>
<div class="r" style="left:804px;top:499px;width:1px;height:20px;background:#eceef3;"></div>
<span class="t" style="left:745px;top:501px;line-height:16px;font-size:12px;letter-spacing:0.025px;">Z Target</span>
<span class="t" style="left:809px;top:501px;line-height:16px;font-size:11px;letter-spacing:-0.107px;">17.606</span>
<div class="r" style="left:724px;top:520px;width:17px;height:20px;background:#f5f6fa;"></div>
<div class="r" style="left:724px;top:540px;width:161px;height:1px;background:#eceef3;"></div>
<div class="r" style="left:804px;top:520px;width:1px;height:20px;background:#eceef3;"></div>
<span class="t" style="left:745px;top:522px;line-height:16px;font-size:12px;letter-spacing:0.079px;">Location</span>
<div class="r" style="left:724px;top:567px;width:17px;height:20px;background:#f5f6fa;"></div>
<div class="r" style="left:724px;top:587px;width:161px;height:1px;background:#eceef3;"></div>
<div class="r" style="left:804px;top:567px;width:1px;height:20px;background:#eceef3;"></div>
<span class="t" style="left:745px;top:569px;line-height:16px;font-size:12px;letter-spacing:-0.044px;">Filename</span>
<span class="t" style="left:809px;top:569px;line-height:16px;font-size:12px;letter-spacing:0.052px;">(none)</span>
<div class="r" style="left:724px;top:588px;width:17px;height:20px;background:#f5f6fa;"></div>
<div class="r" style="left:724px;top:608px;width:161px;height:1px;background:#eceef3;"></div>
<div class="r" style="left:804px;top:588px;width:1px;height:20px;background:#eceef3;"></div>
<span class="t" style="left:745px;top:590px;line-height:16px;font-size:12px;letter-spacing:-0.254px;">Show</span>
<div class="r" style="left:724px;top:609px;width:17px;height:20px;background:#f5f6fa;"></div>
<div class="r" style="left:724px;top:629px;width:161px;height:1px;background:#eceef3;"></div>
<div class="r" style="left:804px;top:609px;width:1px;height:20px;background:#eceef3;"></div>
<span class="t" style="left:745px;top:611px;line-height:16px;font-size:12px;letter-spacing:-0.001px;">Gray</span>
<div class="r" style="left:806px;top:410px;width:79px;height:20px;background:#e1e1e1;border:1px solid #adadad;box-sizing:border-box;"></div>
<span class="t" style="left:828px;top:412px;line-height:16px;font-size:11.5px;letter-spacing:-0.169px;">Place...</span>
<div class="r" style="left:806px;top:520px;width:79px;height:20px;background:#e1e1e1;border:1px solid #adadad;box-sizing:border-box;"></div>
<span class="t" style="left:828px;top:522px;line-height:16px;font-size:11.5px;letter-spacing:-0.169px;">Place...</span>
<div class="r" style="left:866px;top:237px;width:19px;height:20px;background:#e1e1e1;border:1px solid #adadad;box-sizing:border-box;"></div>
<svg class="r" style="left:870px;top:243px" width="11" height="8"><path d="M1.500 1.500 L5.500 5.500 L9.500 1.500" fill="none" stroke="#444" stroke-width="1.1"/></svg>
<div class="r" style="left:866px;top:567px;width:19px;height:20px;background:#e1e1e1;border:1px solid #adadad;box-sizing:border-box;"></div>
<span class="t" style="left:870px;top:568px;line-height:16px;font-size:12px;letter-spacing:-0.001px;">...</span>
<div class="r" style="left:807px;top:591px;width:13px;height:13px;background:#fff;border:1px solid #333;box-sizing:border-box;"></div>
<svg class="r" style="left:807px;top:591px" width="13" height="13"><path d="M3 6.500 L5.500 9 L10.500 3.500" fill="none" stroke="#333" stroke-width="1.1"/></svg>
<div class="r" style="left:807px;top:612px;width:13px;height:13px;background:#fff;border:1px solid #333;box-sizing:border-box;"></div>
<svg class="r" style="left:807px;top:612px" width="13" height="13"><path d="M3 6.500 L5.500 9 L10.500 3.500" fill="none" stroke="#333" stroke-width="1.1"/></svg>
<div class="r" style="left:891px;top:0px;width:2px;height:980px;background:#f4f6fa;"></div>
<div class="r" style="left:893px;top:0px;width:1.4px;height:980px;background:#1a86d9;"></div>
<div class="r" style="left:894.2px;top:0px;width:0.8px;height:980px;background:#3a3a3a;"></div>
<div class="r" style="left:895px;top:0px;width:1023px;height:980px;background:#f0f0f0;"></div>
<div class="r" style="left:895px;top:61.5px;width:1023px;height:1px;background:#d0d0d0;"></div>
<div class="r" style="left:1089.5px;top:2px;width:1px;height:57px;background:#d4d4d4;"></div>
<div class="r" style="left:1094.5px;top:4px;width:3px;height:52px;background:repeating-linear-gradient(#b8b8b8 0 1px,#f8f8f8 1px 2px,transparent 2px 4px)"></div>
<div class="r" style="left:1223px;top:2px;width:1px;height:57px;background:#d4d4d4;"></div>
<div class="r" style="left:1228px;top:4px;width:3px;height:52px;background:repeating-linear-gradient(#b8b8b8 0 1px,#f8f8f8 1px 2px,transparent 2px 4px)"></div>
<div class="r" style="left:1357.5px;top:2px;width:1px;height:57px;background:#d4d4d4;"></div>
<div class="r" style="left:1362.5px;top:4px;width:3px;height:52px;background:repeating-linear-gradient(#b8b8b8 0 1px,#f8f8f8 1px 2px,transparent 2px 4px)"></div>
<div class="r" style="left:1492px;top:2px;width:1px;height:57px;background:#d4d4d4;"></div>
<div class="r" style="left:1497px;top:4px;width:3px;height:52px;background:repeating-linear-gradient(#b8b8b8 0 1px,#f8f8f8 1px 2px,transparent 2px 4px)"></div>
<div class="r" style="left:1577.5px;top:2px;width:1px;height:57px;background:#d4d4d4;"></div>
<div class="r" style="left:1582.5px;top:4px;width:3px;height:52px;background:repeating-linear-gradient(#b8b8b8 0 1px,#f8f8f8 1px 2px,transparent 2px 4px)"></div>
<div class="r" style="left:1674.5px;top:2px;width:1px;height:57px;background:#d4d4d4;"></div>
<div class="r" style="left:1679.5px;top:4px;width:3px;height:52px;background:repeating-linear-gradient(#b8b8b8 0 1px,#f8f8f8 1px 2px,transparent 2px 4px)"></div>
<div class="r" style="left:1759px;top:2px;width:1px;height:57px;background:#d4d4d4;"></div>
<div class="r" style="left:1764px;top:4px;width:3px;height:52px;background:repeating-linear-gradient(#b8b8b8 0 1px,#f8f8f8 1px 2px,transparent 2px 4px)"></div>
<div class="r" style="left:1844px;top:2px;width:1px;height:57px;background:#d4d4d4;"></div>
<div class="r" style="left:1849px;top:4px;width:3px;height:52px;background:repeating-linear-gradient(#b8b8b8 0 1px,#f8f8f8 1px 2px,transparent 2px 4px)"></div>
<div class="r" style="left:899px;top:4px;width:3px;height:52px;background:repeating-linear-gradient(#b8b8b8 0 1px,#f8f8f8 1px 2px,transparent 2px 4px)"></div>
<div class="r" style="left:1502px;top:1px;width:62px;height:59px;background:#cce4f7;border:1px solid #99c9ef;box-sizing:border-box;"></div>
<span class="t" style="left:1565px;top:20.5px;line-height:17px;font-size:13px;font-weight:bold;">»</span>
<span class="t" style="left:1662px;top:20.5px;line-height:17px;font-size:13px;font-weight:bold;">»</span>
<span class="t" style="left:1747px;top:20.5px;line-height:17px;font-size:13px;font-weight:bold;">»</span>
<svg class="r" style="left:1650px;top:27px" width="9" height="6"><path d="M0 .5H8L4 5Z" fill="#222"/></svg>
<svg class="r" style="left:1832px;top:27px" width="9" height="6"><path d="M0 .5H8L4 5Z" fill="#222"/></svg>
<div class="r" style="left:897px;top:64px;width:340px;height:19px;background:#dcdcdc;border:1px solid #c4c4c4;box-sizing:border-box;border-left:none;border-right:none"></div>
<span class="t" style="left:900px;top:66px;line-height:16px;font-size:11px;letter-spacing:-0.302px;">Tree</span>
<svg class="r" style="left:1195px;top:68px" width="36" height="12"><path d="M4.500 1.500h6v5h-6z M1.500 4.500h6v5.500h-6z" fill="#dcdcdc" stroke="#222" stroke-width="1.1"/><path d="M4.500 2h6 M1.500 5h6" stroke="#222" stroke-width="1.6"/><path d="M23 1.500 L31 9.500 M31 1.500 L23 9.500" stroke="#222" stroke-width="1.600"/></svg>
<div class="r" style="left:935px;top:426px;width:300px;height:20px;background:#9b9bd8;"></div>
<span class="t" style="left:940px;top:88px;line-height:16px;font-size:11.5px;letter-spacing:-0.190px;">KUKA Cell Multiaxis</span>
<span class="t" style="left:960px;top:108px;line-height:16px;font-size:11px;letter-spacing:-0.555px;">WCS</span>
<span class="t" style="left:980px;top:128px;line-height:16px;font-size:11.5px;letter-spacing:-0.202px;">Rail</span>
<span class="t" style="left:1000px;top:148px;line-height:16px;font-size:11px;letter-spacing:-0.355px;">KUKA KR 500 3 Base</span>
<span class="t" style="left:1020px;top:168px;line-height:16px;font-size:11px;letter-spacing:-0.405px;">KUKA KR 500 3</span>
<span class="t" style="left:1040px;top:188px;line-height:16px;font-size:12px;letter-spacing:-0.147px;">Spindle</span>
<span class="t" style="left:1040px;top:208px;line-height:16px;font-size:11.5px;letter-spacing:-0.260px;">Tool D25.4 L203.2 Id 1</span>
<span class="t" style="left:1040px;top:228px;line-height:16px;font-size:11.5px;letter-spacing:-0.271px;">Tool D25.4 L203.2 R12.7 Id 2</span>
<span class="t" style="left:980px;top:248px;line-height:16px;font-size:11px;letter-spacing:-0.207px;">KUKA DKP 400 Root</span>
<span class="t" style="left:1000px;top:268px;line-height:16px;font-size:11px;letter-spacing:-0.420px;">KUKA DKP-400</span>
<span class="t" style="left:1020px;top:288px;line-height:16px;font-size:12px;letter-spacing:-0.313px;">Turntable Reference</span>
<span class="t" style="left:1040px;top:308px;line-height:16px;font-size:11.5px;letter-spacing:-0.164px;">Fixture</span>
<span class="t" style="left:1040px;top:328px;line-height:16px;font-size:11.5px;letter-spacing:-0.239px;">Part Reference</span>
<span class="t" style="left:1060px;top:348px;line-height:16px;font-size:12px;letter-spacing:-0.262px;">RhinoPart</span>
<span class="t" style="left:960px;top:368px;line-height:16px;font-size:12px;letter-spacing:-0.231px;">Milling_1_T1_Horizontal_Roughing Settings</span>
<span class="t" style="left:960px;top:388px;line-height:16px;font-size:12px;letter-spacing:-0.306px;">Milling_2_T1_Horizontal_Re_Roughing Settings</span>
<span class="t" style="left:960px;top:408px;line-height:16px;font-size:12px;letter-spacing:-0.306px;">Milling_3_T1_Horizontal_Re_Roughing Settings</span>
<span class="t" style="left:960px;top:428px;line-height:16px;font-size:11.5px;letter-spacing:-0.103px;">Milling_4_T2_Parallel_Finishing Settings</span>
<span class="t" style="left:960px;top:448px;line-height:16px;font-size:11.5px;letter-spacing:-0.103px;">Milling_5_T2_Parallel_Finishing Settings</span>
<span class="t" style="left:960px;top:468px;line-height:16px;font-size:11.5px;letter-spacing:-0.103px;">Milling_6_T2_Parallel_Finishing Settings</span>
<span class="t" style="left:960px;top:488px;line-height:16px;font-size:11.5px;letter-spacing:-0.155px;">Milling_7_T2_4th_Axis_Parallel_Finishing Settings</span>
<span class="t" style="left:960px;top:508px;line-height:16px;font-size:12px;letter-spacing:0.180px;">MainMilling</span>
<span class="t" style="left:980px;top:528px;line-height:16px;font-size:12px;letter-spacing:-0.314px;">Call Milling_1_T1_Horizontal...</span>
<span class="t" style="left:980px;top:548px;line-height:16px;font-size:12px;letter-spacing:-0.314px;">Call Milling_2_T1_Horizontal...</span>
<span class="t" style="left:980px;top:568px;line-height:16px;font-size:12px;letter-spacing:-0.314px;">Call Milling_3_T1_Horizontal...</span>
<span class="t" style="left:980px;top:588px;line-height:16px;font-size:11.5px;letter-spacing:-0.248px;">Call Milling_4_T2_Parallel_F...</span>
<span class="t" style="left:980px;top:608px;line-height:16px;font-size:11.5px;letter-spacing:-0.248px;">Call Milling_5_T2_Parallel_F...</span>
<span class="t" style="left:980px;top:628px;line-height:16px;font-size:11.5px;letter-spacing:-0.248px;">Call Milling_6_T2_Parallel_F...</span>
<span class="t" style="left:980px;top:648px;line-height:16px;font-size:11.5px;letter-spacing:-0.286px;">Call Milling_7_T2_4th_Axis_P...</span>
<span class="t" style="left:960px;top:668px;line-height:16px;font-size:12px;letter-spacing:-0.243px;">Milling_1_T1_Horizontal_Roughing</span>
<span class="t" style="left:960px;top:688px;line-height:16px;font-size:11.5px;letter-spacing:-0.088px;">Milling_2_T1_Horizontal_Re_Roughing</span>
<span class="t" style="left:960px;top:708px;line-height:16px;font-size:11.5px;letter-spacing:-0.088px;">Milling_3_T1_Horizontal_Re_Roughing</span>
<span class="t" style="left:960px;top:728px;line-height:16px;font-size:11.5px;letter-spacing:-0.141px;">Milling_4_T2_Parallel_Finishing</span>
<span class="t" style="left:960px;top:748px;line-height:16px;font-size:11.5px;letter-spacing:-0.141px;">Milling_5_T2_Parallel_Finishing</span>
<span class="t" style="left:960px;top:768px;line-height:16px;font-size:11.5px;letter-spacing:-0.141px;">Milling_6_T2_Parallel_Finishing</span>
<span class="t" style="left:960px;top:788px;line-height:16px;font-size:11.5px;letter-spacing:-0.196px;">Milling_7_T2_4th_Axis_Parallel_Finishing</span>
<svg class="r" style="left:895px;top:84px" width="343" height="730"><path d="M3 8h14l-7 8z" fill="#000"/><path d="M23 28h14l-7 8z" fill="#000"/><path d="M43 48h14l-7 8z" fill="#000"/><path d="M63 68h14l-7 8z" fill="#000"/><path d="M83 88h14l-7 8z" fill="#000"/><path d="M43 168h14l-7 8z" fill="#000"/><path d="M63 188h14l-7 8z" fill="#000"/><path d="M83 208h14l-7 8z" fill="#000"/><path d="M103 248h14l-7 8z" fill="#000"/><path d="M23 428h14l-7 8z" fill="#000"/><path d="M30.5 40.5L30.5 712.5 M50.5 60.5L50.5 172.5 M110.5 100.5L110.5 152.5 M110.5 112.5L120.5 112.5 M110.5 132.5L120.5 132.5 M110.5 152.5L120.5 152.5 M110.5 220.5L110.5 244.5 M110.5 232.5L120.5 232.5 M130.5 260.5L130.5 272.5 M130.5 272.5L140.5 272.5 M30.5 292.5L41.5 292.5 M30.5 312.5L41.5 312.5 M30.5 332.5L41.5 332.5 M30.5 352.5L41.5 352.5 M30.5 372.5L41.5 372.5 M30.5 392.5L41.5 392.5 M30.5 412.5L41.5 412.5 M50.5 440.5L50.5 572.5 M50.5 452.5L61.5 452.5 M50.5 472.5L61.5 472.5 M50.5 492.5L61.5 492.5 M50.5 512.5L61.5 512.5 M50.5 532.5L61.5 532.5 M50.5 552.5L61.5 552.5 M50.5 572.5L61.5 572.5 M30.5 592.5L41.5 592.5 M30.5 612.5L41.5 612.5 M30.5 632.5L41.5 632.5 M30.5 652.5L41.5 652.5 M30.5 672.5L41.5 672.5 M30.5 692.5L41.5 692.5 M30.5 712.5L41.5 712.5" stroke="#7a7a7a" stroke-width="1" fill="none"/></svg>
<div class="r" style="left:899px;top:944px;width:26px;height:22px;background:#e1e1e1;border:1px solid #adadad;box-sizing:border-box;"></div>
<div class="r" style="left:930px;top:944px;width:26px;height:22px;background:#e1e1e1;border:1px solid #adadad;box-sizing:border-box;"></div>
<div class="r" style="left:961px;top:944px;width:26px;height:22px;background:#e1e1e1;border:1px solid #adadad;box-sizing:border-box;"></div>
<div class="r" style="left:992px;top:944px;width:26px;height:22px;background:#e1e1e1;border:1px solid #adadad;box-sizing:border-box;"></div>
<div class="r" style="left:1023px;top:944px;width:26px;height:22px;background:#e1e1e1;border:1px solid #adadad;box-sizing:border-box;"></div>
<div class="r" style="left:1054px;top:944px;width:26px;height:22px;background:#e1e1e1;border:1px solid #adadad;box-sizing:border-box;"></div>
<div class="r" style="left:1888px;top:944px;width:26px;height:22px;background:#e1e1e1;border:1px solid #adadad;box-sizing:border-box;"></div>
<svg class="r" style="left:1888px;top:944px" width="26" height="22"><path d="M7.500 5.500 L18.500 16.500 M18.500 5.500 L7.500 16.500" stroke="#e23030" stroke-width="3.400"/></svg>
<div class="r" style="left:1083px;top:950px;width:558px;height:10px;border:1.5px solid #111;border-radius:5px;box-sizing:border-box;overflow:hidden;background:#2a8686"><div class="r" style="left:-0.5px;top:0;width:61px;height:8px;background:#46a5a5"></div><div class="r" style="left:60.5px;top:0;width:116px;height:8px;background:#b9fbf4"></div><div class="r" style="left:176.5px;top:0;width:110px;height:8px;background:#2a8686"></div><div class="r" style="left:286.5px;top:0;width:24px;height:8px;background:#7edde8"></div><div class="r" style="left:310.5px;top:0;width:103px;height:8px;background:#46a5a5"></div><div class="r" style="left:413.5px;top:0;width:87px;height:8px;background:#b9fbf4"></div><div class="r" style="left:500.5px;top:0;width:55px;height:8px;background:#2a8686"></div></div>
<div class="r" style="left:1625px;top:944px;width:17px;height:22px;background:#0b76dc;border:1px solid #0a3f7a;box-sizing:border-box;border-radius:2px"></div>
<div class="r" style="left:1646px;top:944px;width:60px;height:22px;background:#fff;border:1px solid #a0a0a0;box-sizing:border-box;"></div>
<span class="t" style="left:1650px;top:947px;line-height:16px;font-size:11.5px;letter-spacing:-0.253px;">491186</span>
<div class="r" style="left:1691px;top:946px;width:13px;height:18px;background:#f2f2f2;border:1px solid #bcbcbc;box-sizing:border-box;"></div>
<svg class="r" style="left:1691px;top:946px" width="13" height="18"><path d="M3.500 7 L6.500 3.500 L9.500 7Z M3.500 11 L6.500 14.500 L9.500 11Z" fill="#222"/></svg>
<span class="t" style="left:1710px;top:947px;line-height:16px;font-size:12px;letter-spacing:-0.303px;font-weight:bold;">MainMilling</span>
<span class="t" style="left:1775px;top:947px;line-height:16px;font-size:11px;letter-spacing:-0.146px;">time: 04h 46m 39s</span>
<div class="r" style="left:1239px;top:62px;width:679px;height:840px;background:linear-gradient(#9398a1,#a3a9b4 50%,#b9c0cc);"></div>
<svg class="r" style="left:874px;top:26px" width="18" height="20" viewBox="874 26 18 20"><circle cx="884" cy="36" r="5.8" fill="none" stroke="#9aa0aa" stroke-width="2.400" stroke-dasharray="2.300 1.700"/><circle cx="884" cy="36" r="4.6" fill="none" stroke="#9aa0aa" stroke-width="1"/><circle cx="884" cy="36" r="2" fill="none" stroke="#9aa0aa" stroke-width="1"/></svg><svg class="r" style="left:0;top:90px" width="64" height="510" viewBox="0 90 64 510"><g transform="translate(15.5,105)"><path d="M-5 -9 V5 L-2 2.500 L0.500 8 L2.500 7 L0 1.500 H4.500Z" fill="#fff" stroke="#000" stroke-width="1"/></g><g transform="translate(43.5,105)"><circle cx="0" cy="0" r="2" fill="#fff" stroke="#222" stroke-width=".9"/><path d="M12 6V12H6Z" fill="#7d7d7d"/></g><g transform="translate(15.5,133)"><path d="M-8 9 L-3 -6 L7 6" stroke="#222" stroke-width="1" fill="none"/><circle cx="-8" cy="9" r="1.4" fill="#fff" stroke="#000" stroke-width=".8"/><circle cx="-3" cy="-6" r="1.4" fill="#fff" stroke="#000" stroke-width=".8"/><circle cx="7" cy="6" r="1.4" fill="#fff" stroke="#000" stroke-width=".8"/><path d="M12 6V12H6Z" fill="#7d7d7d"/></g><g transform="translate(43.5,133)"><path d="M-8 -6 H-1 Q9 -6 7 2 Q5 8 -7 7" stroke="#222" stroke-width="1" fill="none"/><rect x="-9.6" y="-7.6" width="3.2" height="3.2" fill="#fff" stroke="#000" stroke-width=".8"/><rect x="4.4" y="-9.6" width="3.2" height="3.2" fill="#fff" stroke="#000" stroke-width=".8"/><rect x="6.4" y="6.4" width="3.2" height="3.2" fill="#fff" stroke="#000" stroke-width=".8"/><rect x="-9.6" y="5.4" width="3.2" height="3.2" fill="#fff" stroke="#000" stroke-width=".8"/><path d="M12 6V12H6Z" fill="#7d7d7d"/></g><g transform="translate(15.5,161)"><circle cx="-1" cy="0" r="9.500" stroke="#222" stroke-width="1" fill="none"/><path d="M-1 0 L5 -6" stroke="#222" stroke-width="1" fill="none"/><circle cx="-1" cy="0" r="1.4" fill="#fff" stroke="#000" stroke-width=".8"/><circle cx="5" cy="-6" r="1.4" fill="#fff" stroke="#000" stroke-width=".8"/><path d="M12 6V12H6Z" fill="#7d7d7d"/></g><g transform="translate(43.5,161)"><ellipse cx="0" cy="0" rx="10.500" ry="6.500" stroke="#222" stroke-width="1" fill="none"/><path d="M0 -6.500 V0 H10" stroke="#222" stroke-width="1" fill="none"/><rect x="-1.6" y="-8.1" width="3.2" height="3.2" fill="#fff" stroke="#000" stroke-width=".8"/><rect x="-1.6" y="-1.6" width="3.2" height="3.2" fill="#fff" stroke="#000" stroke-width=".8"/><rect x="7.4" y="-1.6" width="3.2" height="3.2" fill="#fff" stroke="#000" stroke-width=".8"/><path d="M12 6V12H6Z" fill="#7d7d7d"/></g><g transform="translate(15.5,189)"><path d="M-8 -9 V8 L7 0 Q3 -8 -8 -9Z" stroke="#222" stroke-width="1" fill="none"/><circle cx="-8" cy="-9" r="1.4" fill="#fff" stroke="#000" stroke-width=".8"/><circle cx="-8" cy="8" r="1.4" fill="#fff" stroke="#000" stroke-width=".8"/><circle cx="7" cy="0" r="1.4" fill="#fff" stroke="#000" stroke-width=".8"/><path d="M12 6V12H6Z" fill="#7d7d7d"/></g><g transform="translate(43.5,189)"><rect x="-9" y="-6" width="17" height="11" stroke="#222" stroke-width="1" fill="none"/><circle cx="-9" cy="5" r="1.4" fill="#fff" stroke="#000" stroke-width=".8"/><circle cx="8" cy="-6" r="1.4" fill="#fff" stroke="#000" stroke-width=".8"/><path d="M12 6V12H6Z" fill="#7d7d7d"/></g><g transform="translate(15.5,217)"><path d="M-10 0 L-5.500 -8 H4 L8.500 0 L4 8 H-5.500Z" stroke="#222" stroke-width="1" fill="none"/><path d="M-1 0 H8" stroke="#222" stroke-width="1" fill="none"/><circle cx="-1" cy="0" r="1.4" fill="#fff" stroke="#000" stroke-width=".8"/><circle cx="8" cy="0" r="1.4" fill="#fff" stroke="#000" stroke-width=".8"/><path d="M12 6V12H6Z" fill="#7d7d7d"/></g><g transform="translate(43.5,217)"><path d="M-9 -8 H-2 Q7 -8 7 3 V8" stroke="#111" stroke-width="2" fill="none"/><path d="M-2 -8 H7 V3" stroke="#aaa" stroke-width=".7" fill="none"/><rect x="-10.6" y="-9.6" width="3.2" height="3.2" fill="#fff" stroke="#000" stroke-width=".8"/><rect x="5.4" y="6.4" width="3.2" height="3.2" fill="#fff" stroke="#000" stroke-width=".8"/><path d="M12 6V12H6Z" fill="#7d7d7d"/></g><g transform="translate(15.5,245)"><path d="M-7 -7 L6 -9 L5 6 L-9 3Z" fill="#5b78ea" stroke="#222" stroke-width=".8"/><path d="M-1 -8 L-2 5 M-8 -2 L6 -1" stroke="#2a3a9c" stroke-width=".8"/><rect x="-8.6" y="-8.6" width="3.2" height="3.2" fill="#fff" stroke="#000" stroke-width=".8"/><rect x="4.4" y="-10.6" width="3.2" height="3.2" fill="#fff" stroke="#000" stroke-width=".8"/><rect x="-10.6" y="1.4" width="3.2" height="3.2" fill="#fff" stroke="#000" stroke-width=".8"/><rect x="0.4" y="6.4" width="3.2" height="3.2" fill="#fff" stroke="#000" stroke-width=".8"/><path d="M12 6V12H6Z" fill="#7d7d7d"/></g><g transform="translate(43.5,245)"><path d="M-7 -6 L1 -10 Q9 -6 8 7 L2 9 Q3 -1 -7 -6Z" fill="#5b78ea" stroke="#222" stroke-width=".8"/><path d="M-7 -6 L1 -10 L4 -7 L-4 -4Z M2 9 L8 7 L8 2 L2 4Z" fill="#fff" stroke="#222" stroke-width=".7"/><path d="M12 6V12H6Z" fill="#7d7d7d"/></g><g transform="translate(15.5,273)"><path d="M-9 -4 L-1 -8 L8 -5 V5 L0 9 L-9 5Z" fill="#5b78ea" stroke="#2a3a9c" stroke-width=".8"/><path d="M-9 -4 L0 -1 L8 -5 L-1 -8Z" fill="#93a8ff"/><path d="M0 -1 V9 L8 5 V-5Z" fill="#3e58c8"/><path d="M12 6V12H6Z" fill="#7d7d7d"/></g><g transform="translate(43.5,273)"><circle cx="3" cy="-4" r="7" fill="#5b78ea" stroke="#2a3a9c" stroke-width=".9"/><circle cx="-4" cy="3" r="7" fill="#5b78ea" stroke="#2a3a9c" stroke-width=".9"/><path d="M-11 3 Q-4 0 3 3 M-4 -4 Q-7 3 -4 10 M-4 -4 Q4 -7 10 -4" fill="none" stroke="#2a3a9c" stroke-width=".7"/><path d="M12 6V12H6Z" fill="#7d7d7d"/></g><g transform="translate(15.5,301)"><ellipse cx="0" cy="-8" rx="5.500" ry="2.300" fill="#fff" stroke="#222" stroke-width=".8"/><path d="M-11 -2 Q0 3 11 -2 V7 Q0 12 -11 7Z" fill="#5b78ea" stroke="#2a3a9c" stroke-width=".8"/><ellipse cx="0" cy="5.500" rx="6" ry="2.500" fill="none" stroke="#fff" stroke-width="1.600"/><path d="M12 6V12H6Z" fill="#7d7d7d"/></g><g transform="translate(43.5,301)"><path d="M-10 4 L-2 -8 Q4 -5 10 -7 L3 7 Q-3 3 -10 4Z" fill="#5b78ea" stroke="#2a3a9c" stroke-width=".8"/><path d="M-6 -2 Q0 0 7 -1 M-3 6 L4 -6 M-7 5 L1 -7" fill="none" stroke="#2a3a9c" stroke-width=".7"/><path d="M12 6V12H6Z" fill="#7d7d7d"/></g><g transform="translate(15.5,329)"><path d="M-10 -6 h4 q0 -4 3 -3 q2 1 1 3 h4 v4 q4 0 3 3 q-1 2 -3 1 v4 h-12z" fill="#f5a21a" stroke="#a86400" stroke-width=".8"/><path d="M-1 2 h4 q0 -4 3 -3 q2 1 1 3 h4 v9 h-12z" fill="#fff" stroke="#555" stroke-width=".8"/></g><g transform="translate(43.5,329)"><path d="M-9 9 L-7 -9 L-2 1 L9 -9 L3 3 L10 8 L0 6 L-2 10 L-4 6Z" fill="#f8a412" stroke="#e07800" stroke-width=".6"/><path d="M-8 8 L-6 -3 L-2 3 L4 -3 L1 4 L6 7 L-1 6Z" fill="#ffd24a"/></g><g transform="translate(15.5,357)"><rect x="-11" y="-1" width="13" height="5" fill="#fff" stroke="#000" stroke-width=".9"/><path d="M-2 -9 H4 L1 -1 H-2Z" fill="#1c2a90"/><path d="M2 4 L6 1 L11 6 L7 9Z" fill="#fff" stroke="#000" stroke-width=".9"/></g><g transform="translate(43.5,357)"><rect x="-10" y="-1" width="18" height="5" fill="#fff" stroke="#000" stroke-width=".9"/><path d="M0 -9 H6 L3 -1 H0Z" fill="#1c2a90"/></g><g transform="translate(15.5,385)"><circle cx="0" cy="-3" r="5" fill="#93a8ff" stroke="#000" stroke-width=".9"/><circle cx="-4" cy="3" r="5" fill="#fff" stroke="#000" stroke-width=".9"/><circle cx="4" cy="3" r="5" fill="#16208a" stroke="#000" stroke-width=".9"/><path d="M12 6V12H6Z" fill="#7d7d7d"/></g><g transform="translate(43.5,385)"><circle cx="0" cy="-5" r="4" fill="#93a8ff" stroke="#2a3a9c" stroke-width=".7"/><circle cx="-5" cy="3" r="4" fill="#fff" stroke="#222" stroke-width=".7"/><circle cx="5" cy="4" r="4" fill="#16208a"/></g><g transform="translate(15.5,413)"><path d="M-11 -5 Q0 -8 5 5 L4 9" stroke="#222" stroke-width="1" fill="none" stroke-width="1.200"/><rect x="-7.6" y="-7.6" width="3.2" height="3.2" fill="#fff" stroke="#000" stroke-width=".8"/><rect x="3.4" y="2.4" width="3.2" height="3.2" fill="#fff" stroke="#000" stroke-width=".8"/><path d="M12 6V12H6Z" fill="#7d7d7d"/></g><g transform="translate(43.5,413)"><path d="M-10 -7 Q5 -6 7 9" stroke="#111" stroke-width="2.200" fill="none"/><path d="M-11 -10 H-3 Q10 -8 11 4" stroke="#222" stroke-width=".9" stroke-dasharray="1.200 1.200" fill="none"/><rect x="-4.6" y="-11.6" width="3.2" height="3.2" fill="#fff" stroke="#000" stroke-width=".8"/><rect x="8.4" y="0.4" width="3.2" height="3.2" fill="#fff" stroke="#000" stroke-width=".8"/><path d="M12 6V12H6Z" fill="#7d7d7d"/></g><g transform="translate(15.5,441)"><path d="M-9 -10 H9 V-5 H7 Q6 -7 3 -7 V6 Q3 8 6 8 V10 H-6 V8 Q-3 8 -3 6 V-7 Q-6 -7 -7 -5 H-9Z" fill="#3a62dc" stroke="#14248a" stroke-width=".9"/></g><g transform="translate(43.5,441)"><rect x="-9" y="2" width="7" height="7" fill="#fff" stroke="#222" stroke-width=".9"/><rect x="3" y="-10" width="7" height="7" fill="#5b78ea" stroke="#2a3a9c" stroke-width=".9"/><path d="M-2 2 L4 -4 M4 -4 h-3.500 M4 -4 v3.500" stroke="#222" stroke-width=".9" fill="none"/><path d="M12 6V12H6Z" fill="#7d7d7d"/></g><g transform="translate(15.5,469)"><rect x="-9" y="-10" width="6" height="6" fill="#5b78ea" stroke="#222" stroke-width=".8"/><rect x="-9" y="1" width="6" height="6" fill="#fff" stroke="#222" stroke-width=".8"/><rect x="-1" y="-4" width="6" height="6" fill="#5b78ea" stroke="#222" stroke-width=".8"/><rect x="3" y="3" width="6" height="6" fill="#5b78ea" stroke="#222" stroke-width=".8"/><rect x="3" y="-9" width="6" height="6" fill="#fff" stroke="#222" stroke-width=".8"/></g><g transform="translate(43.5,469)"><rect x="-10" y="-9" width="5" height="14" fill="#fff" stroke="#222" stroke-width=".9"/><path d="M0 5 L7 -3 L11 0 L4 9Z" fill="#5b78ea" stroke="#2a3a9c" stroke-width=".8"/><path d="M-5 -6 H3 V-2 M3 -2 l-2 -2.500 M3 -2 l2 -2.500" stroke="#222" stroke-width=".9" fill="none"/></g><g transform="translate(15.5,497)"><path d="M-10 -4 Q-10 -9 -2 -10 Q8 -9 9 -4 V6 L2 10 L-10 6Z" fill="#5b78ea" stroke="#2a3a9c" stroke-width=".8"/><path d="M-2 2 H5 V8 L2 10 H-2Z" fill="#fff" stroke="#222" stroke-width=".7"/><path d="M-10 -4 L-1 -1 L9 -4" fill="none" stroke="#93a8ff" stroke-width=".8"/><path d="M12 6V12H6Z" fill="#7d7d7d"/></g><g transform="translate(43.5,497)"><path d="M-11 8 L-6 2 H11 L7 8Z" fill="#5b78ea" stroke="#2a3a9c" stroke-width=".8"/><path d="M-6 4 V-6 h-2 l3 -4 l3 4 h-2 V4Z" fill="#fff" stroke="#555" stroke-width=".6"/><path d="M-1 4 V-6 h-2 l3 -4 l3 4 h-2 V4Z" fill="#fff" stroke="#555" stroke-width=".6"/><path d="M4 4 V-6 h-2 l3 -4 l3 4 h-2 V4Z" fill="#fff" stroke="#555" stroke-width=".6"/><path d="M12 6V12H6Z" fill="#7d7d7d"/></g><g transform="translate(15.5,525)"><rect x="-10" y="-10" width="4.500" height="4.500" fill="#5b78ea" stroke="#222" stroke-width=".8"/><rect x="-3" y="-10" width="4.500" height="4.500" fill="#5b78ea" stroke="#222" stroke-width=".8"/><rect x="4" y="-10" width="4.500" height="4.500" fill="#5b78ea" stroke="#222" stroke-width=".8"/><rect x="-10" y="-3" width="4.500" height="4.500" fill="#5b78ea" stroke="#222" stroke-width=".8"/><rect x="-3" y="-3" width="4.500" height="4.500" fill="#5b78ea" stroke="#222" stroke-width=".8"/><rect x="4" y="-3" width="4.500" height="4.500" fill="#5b78ea" stroke="#222" stroke-width=".8"/><rect x="-10" y="4" width="4.500" height="4.500" fill="#fff" stroke="#222" stroke-width=".8"/><rect x="-3" y="4" width="4.500" height="4.500" fill="#fff" stroke="#222" stroke-width=".8"/><rect x="4" y="4" width="4.500" height="4.500" fill="#fff" stroke="#222" stroke-width=".8"/><path d="M12 6V12H6Z" fill="#7d7d7d"/></g><g transform="translate(43.5,525)"><rect x="-3.500" y="-10" width="6" height="6" fill="#fff" stroke="#222" stroke-width=".9"/><rect x="-3.500" y="-3" width="6" height="6" fill="#fff" stroke="#222" stroke-width=".9"/><rect x="-3.500" y="4" width="6" height="6" fill="#fff" stroke="#222" stroke-width=".9"/><path d="M-.5 -11 V11" stroke="#d01010" stroke-width="1.400"/><path d="M12 6V12H6Z" fill="#7d7d7d"/></g><g transform="translate(15.5,553)"><path d="M-10 -5 L-5 -9 L-2 7 L-7 10Z" fill="#fff" stroke="#222" stroke-width=".9"/><path d="M-4 5 L2 -9 L8 -8 L2 8Z" fill="#5b78ea" stroke="#2a3a9c" stroke-width=".9"/><path d="M-5 -9 L-1 -8 L-2 7" fill="#ddd" stroke="#222" stroke-width=".7"/><path d="M12 6V12H6Z" fill="#7d7d7d"/></g><g transform="translate(43.5,553)"><path d="M-9 1 L-6 -1 L-3 4 Q2 -5 9 -10 L10 -9 Q3 -2 -2 9 L-4 9Z" fill="#000"/><path d="M12 6V12H6Z" fill="#7d7d7d"/></g><g transform="translate(15.5,581)"><path d="M-11 -3 L-4 -6 L1 -4 V4 L-5 8 L-11 5Z" fill="#c8c8c8" stroke="#444" stroke-width=".8"/><path d="M-11 -3 L-5 -1 L1 -4 M-5 -1 V8" fill="none" stroke="#444" stroke-width=".7"/><path d="M4 -5 L-1 8 Q5 11 10 7Z" fill="#a0a0a0" stroke="#444" stroke-width=".8"/><path d="M12 6V12H6Z" fill="#7d7d7d"/></g><g transform="translate(43.5,581)"><path d="M-10 6 L0 -3 L10 5 L1 10Z" fill="#f4b040" stroke="#9a6400" stroke-width=".8"/><path d="M0 -3 L1 10 L10 5Z" fill="#fad47c" stroke="#9a6400" stroke-width=".6"/><path d="M-5 -6 L4 -10 V-12 L9 -9 L5 -5 V-7 L-3 -3Z" fill="#bbb" stroke="#333" stroke-width=".7"/><path d="M12 6V12H6Z" fill="#7d7d7d"/></g></svg><svg class="r" style="left:0;top:46px" width="520" height="30" viewBox="0 46 520 30"><defs><radialGradient id="asg" cx=".4" cy=".35" r=".7"><stop offset="0" stop-color="#5a8ad0"/><stop offset="1" stop-color="#123a7a"/></radialGradient><linearGradient id="lp" x1="0" x2="1" y1="0" y2="1"><stop offset="0" stop-color="#9ad0ff"/><stop offset="1" stop-color="#2a78e0"/></linearGradient></defs><circle cx="21" cy="60" r="10.300" fill="#d6dae2" stroke="#8a94a8" stroke-width="1"/><circle cx="21" cy="60" r="8.300" fill="url(#asg)"/><path d="M16 65 Q15 58 19 55 L22 54 L24 56 L21 58 L23 62 L21 65Z" fill="#fff"/><path d="M22 54 l3 1 l-1 2z" fill="#fff"/><path d="M111 56 L125 50 Q131 50 131 55 V66 L124 72 L113 72 Q109 72 110 67Z" fill="url(#lp)" stroke="#1a5ab0" stroke-width=".9"/><path d="M111 56 L125 50 Q131 50 131 54 L124 59 L112 60Z" fill="#c4e2ff" opacity=".9"/><path d="M124 59 V72 L131 66 V54Z" fill="#1f6ad8"/><g transform="translate(215,60)"><path d="M-14 3 L-9 1 L-7 9 L-12 11Z" fill="#fff" stroke="#111" stroke-width=".9"/><path d="M-4 -9 L5 -10 L7 -6 L2 -5 L6 1 L3 4 L9 6 V10 H-3 V6 L0 4 L-5 -3 L-1 -5Z" fill="#e86a28" stroke="#8a3008" stroke-width=".7"/><path d="M3 7 H9 V10 H3Z M-3 8 H3 V10 H-3Z" fill="#222"/></g><g transform="translate(329,60)"><rect x="-11" y="-2" width="2.200" height="2.200" fill="#111"/><rect x="-14" y="3" width="2.200" height="2.200" fill="#111"/><rect x="-9" y="3" width="2.200" height="2.200" fill="#111"/><rect x="-14" y="8" width="2.200" height="2.200" fill="#111"/><rect x="-9" y="8" width="2.200" height="2.200" fill="#111"/><path d="M-4 -9 L5 -10 L7 -6 L2 -5 L6 1 L3 4 L9 6 V10 H-3 V6 L0 4 L-5 -3 L-1 -5Z" fill="#e86a28" stroke="#8a3008" stroke-width=".7"/><path d="M3 7 H9 V10 H3Z M-3 8 H3 V10 H-3Z" fill="#222"/></g><circle cx="437" cy="54" r="5.5" fill="#eceef2" stroke="#8d929c" stroke-width="2.200" stroke-dasharray="2.400 1.600"/><circle cx="437" cy="54" r="4.3" fill="#eceef2" stroke="#8d929c" stroke-width=".9"/><circle cx="437" cy="54" r="1.600" fill="#fff" stroke="#8d929c" stroke-width=".8"/><circle cx="448" cy="64" r="6.5" fill="#eceef2" stroke="#8d929c" stroke-width="2.200" stroke-dasharray="2.400 1.600"/><circle cx="448" cy="64" r="5.3" fill="#eceef2" stroke="#8d929c" stroke-width=".9"/><circle cx="448" cy="64" r="1.600" fill="#fff" stroke="#8d929c" stroke-width=".8"/></svg><svg class="r" style="left:64px;top:100px" width="262" height="130" viewBox="64 100 262 130"><defs><radialGradient id="hp" cx=".4" cy=".35" r=".7"><stop offset="0" stop-color="#7ab4f8"/><stop offset="1" stop-color="#1a60c8"/></radialGradient></defs><g transform="translate(113,118.5) scale(0.95)"><path d="M-8 -9 H4 L2 -3 H-1 V8 Q-2 10 -3 8 V-3 H-6Z" fill="#b8b8b8" stroke="#555" stroke-width=".8"/><path d="M-6 -8 H-3 L-4 -3 H-5Z" fill="#f4f4f4"/><path d="M4 -6 H8 V5 L5 8 H4Z" fill="#d8d8d8" stroke="#555" stroke-width=".8"/><path d="M4 4 L7 6 L5 9 L3 7Z" fill="#f0c020" stroke="#806000" stroke-width=".6"/></g><path d="M226.500 120 L230.500 115.500 L234.500 120" fill="none" stroke="#444" stroke-width="1.600"/><path d="M227.500 120.500 L230.500 117 L233.500 120.500" fill="none" stroke="#fff" stroke-width=".8"/><path d="M246 126 L254 116" stroke="#c88a3a" stroke-width="3.200" stroke-linecap="round"/><path d="M250 113 L254 111 L260 115 L258 118 L256 116 L254 119Z" fill="#b8bcc4" stroke="#666" stroke-width=".7"/><path d="M266.500 116 h6 l-3 3.500z" fill="#444"/><circle cx="286.3" cy="117.6" r="6.3" fill="none" stroke="#7d828c" stroke-width="2.400" stroke-dasharray="2.300 1.700"/><circle cx="286.3" cy="117.6" r="5.1" fill="none" stroke="#7d828c" stroke-width="1"/><circle cx="286.3" cy="117.6" r="2" fill="none" stroke="#7d828c" stroke-width="1"/><circle cx="309.500" cy="117.600" r="7.600" fill="url(#hp)" stroke="#c8d8f0" stroke-width="1"/><text x="309.500" y="122" text-anchor="middle" font-family="Liberation Sans,sans-serif" font-size="12" font-weight="bold" fill="#fff">?</text><path d="M75 143 L82 139.500 L89 142 V150 L82 154 L75 151Z" fill="#3a8ae0" stroke="#1a4a9a" stroke-width=".7"/><path d="M77 146 H84 V151 H77Z" fill="#223" /><path d="M74 151 L82 154.500 L90 150 L88 153 L82 156 L75 153Z" fill="#8a8e96"/><path d="M79 146 v3 M82 146 v3" stroke="#cfd8ff" stroke-width="1"/><ellipse cx="82" cy="167.500" rx="7.500" ry="6" transform="rotate(-25 82 167.500)" fill="#d8d4e6" stroke="#4a4660" stroke-width="1"/><ellipse cx="80" cy="166" rx="2" ry="1.600" fill="#4a4660"/><ellipse cx="85" cy="165" rx="1.800" ry="1.400" fill="#4a4660"/><ellipse cx="83" cy="170" rx="2" ry="1.500" fill="#4a4660"/><path d="M75 171 Q80 175 88 171" stroke="#333" stroke-width="1.400" fill="none"/><rect x="74" y="181" width="15" height="15" fill="#f8c41c"/><circle cx="81.500" cy="188.500" r="3.200" fill="none" stroke="#fff" stroke-width="1.300"/><path d="M81.500 182.500v3M81.500 191.500v3M75.500 188.500h3M84.500 188.500h3M77.300 184.300l2 2M83.700 190.700l2 2M85.700 184.300l-2 2M79.300 190.700l-2 2" stroke="#fff" stroke-width="1.100"/><path d="M162.500 143 L171 138.500 L179.500 142 V150.500 L171 155 L162.500 151.500Z" fill="#f8a81c" stroke="#c87808" stroke-width=".8"/><path d="M162.500 143 L171 146 L179.500 142 L171 138.500Z" fill="#fdd060"/><path d="M171 146 V155 L179.500 150.500 V142Z" fill="#f09010"/><path d="M164 163 L172 160 L179 163 V172 L171 175 L164 172Z" fill="#e8d870" stroke="#333" stroke-width=".8"/><path d="M166 165 h4 v4 h-4z M172 166 h4 v4 h-4z" fill="#40a0d0"/><path d="M163 160 l3 -2 l1 3z M176 158 l3 1 l-2 3z M162 170 l2 4 l2 -3z M177 173 l3 -1 l-1 -3z M170 158 h3 v3 h-3z" fill="#20b020" stroke="#107010" stroke-width=".5"/><path d="M174 183.500h8M174 188.500h8M174 193.500h8" stroke="#222" stroke-width="1.200"/><path d="M168.500 181.500l2 2.500l-2 2.500l-2 -2.500z" fill="#e02020"/><path d="M168.500 186l2 2.500l-2 2.500l-2 -2.500z" fill="#2030e0"/><path d="M168.500 190.500l2 2.500l-2 2.500l-2 -2.500z" fill="#20b020"/></svg><svg class="r" style="left:66px;top:227px" width="256" height="442" viewBox="66 227 256 442"><path d="M96 230 h5 l1.500 2 h7.500 v10 h-14z" fill="#fbe890" stroke="#d8a828" stroke-width=".8"/><path d="M93 233 h5 l1.500 2 h7.500 v10 h-14z" fill="#f8d468" stroke="#e0a820" stroke-width=".8"/><path d="M118.5 254 L125.5 250 L133.5 253 V261 L125.5 265 L118.5 262Z" fill="#3a8ae0" stroke="#1a4a9a" stroke-width=".7"/><path d="M120.5 257 h7 v5 h-7z" fill="#223"/><path d="M117.5 262 l8 4 l8 -5 l-1 3 l-7 4 l-7 -3z" fill="#8a8e96"/><ellipse cx="125.5" cy="277" rx="8" ry="6.500" transform="rotate(-25 125.5 277)" fill="#d8d4e6" stroke="#4a4660" stroke-width="1"/><ellipse cx="123.5" cy="275.5" rx="2" ry="1.600" fill="#4a4660"/><ellipse cx="128.5" cy="274.5" rx="1.800" ry="1.400" fill="#4a4660"/><ellipse cx="126.5" cy="279.5" rx="2" ry="1.500" fill="#4a4660"/><path d="M118.5 281 q5 4 13 0" stroke="#333" stroke-width="1.400" fill="none"/><path d="M117 293 l8.500 -4.500 l8.500 3.500 v8.500 l-8.500 4.500 l-8.500 -3.500z" fill="#f8a81c" stroke="#c87808" stroke-width=".8"/><path d="M117 293 l8.500 3 l8.500 -4 l-8.500 -3.500z" fill="#fdd060"/><path d="M125.5 296 v9 l8.500 -4.500 v-8.500z" fill="#f09010"/><path d="M117.5 320 l7 -9 l5 1 l4 5 l-3 8 l-5 3 l-8 -2z" fill="#7a68c8" stroke="#3a2a80" stroke-width=".8"/><path d="M120.5 321 l6 -8 M124.5 322 l5 -7" stroke="#d8d0ff" stroke-width="1.300"/><path d="M128.5 318 v6 l4 -2 v-5z" fill="#444"/><rect x="117" y="328.5" width="17" height="17" fill="#fbe48c" stroke="#e8902a" stroke-width="1.200"/><path d="M124.5 340 v-9 m-2 2.500 l2 -3 l2 3" stroke="#2a5ae0" stroke-width="1.300" fill="none"/><path d="M124.5 340 l7 3 m-3 .500 l3.500 -.3 l-1.500 -3" stroke="#2a5ae0" stroke-width="1.300" fill="none"/><path d="M125.5 338 l4 -4 m-3.500 0 h3.500 v3" stroke="#20a0d0" stroke-width="1.200" fill="none"/><path d="M118 329.5 h2v2h-2z M131 342.5 h2v2h-2z" fill="#fff" stroke="#e8902a" stroke-width=".5"/><path d="M142 353 h5 l1.500 2 h7.500 v10 h-14z" fill="#fbe07c" stroke="#c89a28" stroke-width=".8"/><path d="M143.2 350.5 l1.200 -3.500 l1.200 3.500 l3.500 -1.200 l-2 3 l3 2 l-3.600 .5 l.5 3.600 l-2.600 -2.500 l-2.600 2.500 l.5 -3.600 l-3.600 -.5 l3 -2 l-2 -3z" fill="#f03818" stroke="#a01808" stroke-width=".5"/><circle cx="144.4" cy="354.7" r="1.800" fill="#ffd040"/><rect x="117" y="368.5" width="17" height="17" fill="#fbe48c" stroke="#e8902a" stroke-width="1.200"/><path d="M124.5 380 v-9 m-2 2.500 l2 -3 l2 3" stroke="#2a5ae0" stroke-width="1.300" fill="none"/><path d="M124.5 380 l7 3 m-3 .500 l3.500 -.3 l-1.500 -3" stroke="#2a5ae0" stroke-width="1.300" fill="none"/><path d="M125.5 378 l4 -4 m-3.500 0 h3.500 v3" stroke="#20a0d0" stroke-width="1.200" fill="none"/><path d="M118 369.5 h2v2h-2z M131 382.5 h2v2h-2z" fill="#fff" stroke="#e8902a" stroke-width=".5"/><path d="M142 393 h5 l1.500 2 h7.500 v10 h-14z" fill="#fbe07c" stroke="#c89a28" stroke-width=".8"/><path d="M143.2 390.5 l1.200 -3.500 l1.200 3.500 l3.500 -1.200 l-2 3 l3 2 l-3.600 .5 l.5 3.600 l-2.600 -2.500 l-2.600 2.500 l.5 -3.600 l-3.600 -.5 l3 -2 l-2 -3z" fill="#f03818" stroke="#a01808" stroke-width=".5"/><circle cx="144.4" cy="394.7" r="1.800" fill="#ffd040"/><rect x="117" y="408.5" width="17" height="17" fill="#fbe48c" stroke="#e8902a" stroke-width="1.200"/><path d="M124.5 420 v-9 m-2 2.500 l2 -3 l2 3" stroke="#2a5ae0" stroke-width="1.300" fill="none"/><path d="M124.5 420 l7 3 m-3 .500 l3.500 -.3 l-1.500 -3" stroke="#2a5ae0" stroke-width="1.300" fill="none"/><path d="M125.5 418 l4 -4 m-3.500 0 h3.500 v3" stroke="#20a0d0" stroke-width="1.200" fill="none"/><path d="M118 409.5 h2v2h-2z M131 422.5 h2v2h-2z" fill="#fff" stroke="#e8902a" stroke-width=".5"/><path d="M142 433 h5 l1.500 2 h7.500 v10 h-14z" fill="#fbe07c" stroke="#c89a28" stroke-width=".8"/><path d="M143.2 430.5 l1.200 -3.500 l1.200 3.500 l3.500 -1.200 l-2 3 l3 2 l-3.600 .5 l.5 3.600 l-2.600 -2.500 l-2.600 2.500 l.5 -3.600 l-3.600 -.5 l3 -2 l-2 -3z" fill="#f03818" stroke="#a01808" stroke-width=".5"/><circle cx="144.4" cy="434.7" r="1.800" fill="#ffd040"/><rect x="117" y="448.5" width="17" height="17" fill="#fbe48c" stroke="#e8902a" stroke-width="1.200"/><path d="M124.5 460 v-9 m-2 2.500 l2 -3 l2 3" stroke="#2a5ae0" stroke-width="1.300" fill="none"/><path d="M124.5 460 l7 3 m-3 .500 l3.500 -.3 l-1.500 -3" stroke="#2a5ae0" stroke-width="1.300" fill="none"/><path d="M125.5 458 l4 -4 m-3.500 0 h3.500 v3" stroke="#20a0d0" stroke-width="1.200" fill="none"/><path d="M118 449.5 h2v2h-2z M131 462.5 h2v2h-2z" fill="#fff" stroke="#e8902a" stroke-width=".5"/><path d="M142 473 h5 l1.500 2 h7.500 v10 h-14z" fill="#fbe07c" stroke="#c89a28" stroke-width=".8"/><path d="M143.2 470.5 l1.200 -3.500 l1.200 3.500 l3.500 -1.200 l-2 3 l3 2 l-3.600 .5 l.5 3.600 l-2.600 -2.500 l-2.600 2.500 l.5 -3.600 l-3.600 -.5 l3 -2 l-2 -3z" fill="#f03818" stroke="#a01808" stroke-width=".5"/><circle cx="144.4" cy="474.7" r="1.800" fill="#ffd040"/><rect x="117" y="488.5" width="17" height="17" fill="#fbe48c" stroke="#e8902a" stroke-width="1.200"/><path d="M124.5 500 v-9 m-2 2.500 l2 -3 l2 3" stroke="#2a5ae0" stroke-width="1.300" fill="none"/><path d="M124.5 500 l7 3 m-3 .500 l3.500 -.3 l-1.500 -3" stroke="#2a5ae0" stroke-width="1.300" fill="none"/><path d="M125.5 498 l4 -4 m-3.500 0 h3.500 v3" stroke="#20a0d0" stroke-width="1.200" fill="none"/><path d="M118 489.5 h2v2h-2z M131 502.5 h2v2h-2z" fill="#fff" stroke="#e8902a" stroke-width=".5"/><path d="M142 513 h5 l1.500 2 h7.500 v10 h-14z" fill="#fbe07c" stroke="#c89a28" stroke-width=".8"/><path d="M143.2 510.5 l1.200 -3.500 l1.200 3.500 l3.500 -1.200 l-2 3 l3 2 l-3.600 .5 l.5 3.600 l-2.600 -2.500 l-2.600 2.500 l.5 -3.600 l-3.600 -.5 l3 -2 l-2 -3z" fill="#f03818" stroke="#a01808" stroke-width=".5"/><circle cx="144.4" cy="514.7" r="1.800" fill="#ffd040"/><rect x="117" y="528.5" width="17" height="17" fill="#fbe48c" stroke="#e8902a" stroke-width="1.200"/><path d="M124.5 540 v-9 m-2 2.500 l2 -3 l2 3" stroke="#2a5ae0" stroke-width="1.300" fill="none"/><path d="M124.5 540 l7 3 m-3 .500 l3.500 -.3 l-1.500 -3" stroke="#2a5ae0" stroke-width="1.300" fill="none"/><path d="M125.5 538 l4 -4 m-3.500 0 h3.500 v3" stroke="#20a0d0" stroke-width="1.200" fill="none"/><path d="M118 529.5 h2v2h-2z M131 542.5 h2v2h-2z" fill="#fff" stroke="#e8902a" stroke-width=".5"/><path d="M142 553 h5 l1.500 2 h7.500 v10 h-14z" fill="#fbe07c" stroke="#c89a28" stroke-width=".8"/><path d="M143.2 550.5 l1.200 -3.500 l1.200 3.500 l3.500 -1.200 l-2 3 l3 2 l-3.600 .5 l.5 3.600 l-2.600 -2.500 l-2.600 2.500 l.5 -3.600 l-3.600 -.5 l3 -2 l-2 -3z" fill="#f03818" stroke="#a01808" stroke-width=".5"/><circle cx="144.4" cy="554.7" r="1.800" fill="#ffd040"/><rect x="117" y="568.5" width="17" height="17" fill="#fbe48c" stroke="#e8902a" stroke-width="1.200"/><path d="M124.5 580 v-9 m-2 2.500 l2 -3 l2 3" stroke="#2a5ae0" stroke-width="1.300" fill="none"/><path d="M124.5 580 l7 3 m-3 .500 l3.500 -.3 l-1.500 -3" stroke="#2a5ae0" stroke-width="1.300" fill="none"/><path d="M125.5 578 l4 -4 m-3.500 0 h3.500 v3" stroke="#20a0d0" stroke-width="1.200" fill="none"/><path d="M118 569.5 h2v2h-2z M131 582.5 h2v2h-2z" fill="#fff" stroke="#e8902a" stroke-width=".5"/><path d="M142 593 h5 l1.500 2 h7.500 v10 h-14z" fill="#fbe07c" stroke="#c89a28" stroke-width=".8"/><path d="M143.2 590.5 l1.200 -3.500 l1.200 3.500 l3.500 -1.200 l-2 3 l3 2 l-3.600 .5 l.5 3.600 l-2.600 -2.500 l-2.600 2.500 l.5 -3.600 l-3.600 -.5 l3 -2 l-2 -3z" fill="#f03818" stroke="#a01808" stroke-width=".5"/><circle cx="144.4" cy="594.7" r="1.800" fill="#ffd040"/></svg><svg class="r" style="left:66px;top:669px" width="256" height="290" viewBox="66 669 256 290"><path d="M73 680 l7 -4 l7 3 v7 l-7 4 l-7 -3z" fill="#f8c43c" stroke="#7a5a10" stroke-width=".8"/><path d="M75 682 h9 v3 h-9z" fill="#fff" stroke="#555" stroke-width=".5"/><circle cx="75" cy="688" r="2.600" fill="#cfe4ff" stroke="#223a7a" stroke-width="1"/><circle cx="81" cy="688" r="2.600" fill="#cfe4ff" stroke="#223a7a" stroke-width="1"/><path d="M75.5 686 q2.500 -3 5 0" fill="none" stroke="#223a7a" stroke-width="1"/><circle cx="99" cy="688" r="2.600" fill="#cfe4ff" stroke="#223a7a" stroke-width="1"/><circle cx="105" cy="688" r="2.600" fill="#cfe4ff" stroke="#223a7a" stroke-width="1"/><path d="M99.5 686 q2.500 -3 5 0" fill="none" stroke="#223a7a" stroke-width="1"/><path d="M107.500 675 l2 2.500 l-2 2.500 l-2 -2.500z" fill="#e02020"/><path d="M107.500 680 l2 2.500 l-2 2.500 l-2 -2.500z" fill="#2030e0"/><path d="M111 678h5M111 682h5M111 686h5" stroke="#222" stroke-width="1"/><circle cx="123" cy="688" r="2.600" fill="#cfe4ff" stroke="#223a7a" stroke-width="1"/><circle cx="129" cy="688" r="2.600" fill="#cfe4ff" stroke="#223a7a" stroke-width="1"/><path d="M123.5 686 q2.500 -3 5 0" fill="none" stroke="#223a7a" stroke-width="1"/><path d="M124 683 q5 -9 12 -7" fill="none" stroke="#40a0e0" stroke-width="3"/><circle cx="147" cy="688" r="2.600" fill="#cfe4ff" stroke="#223a7a" stroke-width="1"/><circle cx="153" cy="688" r="2.600" fill="#cfe4ff" stroke="#223a7a" stroke-width="1"/><path d="M147.5 686 q2.500 -3 5 0" fill="none" stroke="#223a7a" stroke-width="1"/><path d="M150 676 l9 -2 v8 l-9 2z" fill="#3a8ae0" stroke="#1a4a9a" stroke-width=".6"/><circle cx="171" cy="688" r="2.600" fill="#cfe4ff" stroke="#223a7a" stroke-width="1"/><circle cx="177" cy="688" r="2.600" fill="#cfe4ff" stroke="#223a7a" stroke-width="1"/><path d="M171.5 686 q2.500 -3 5 0" fill="none" stroke="#223a7a" stroke-width="1"/><path d="M170 675h14M170 678h14M170 681h14M172 684h12" stroke="#30b8d8" stroke-width="1.500"/><circle cx="196" cy="688" r="2.600" fill="#cfe4ff" stroke="#223a7a" stroke-width="1"/><circle cx="202" cy="688" r="2.600" fill="#cfe4ff" stroke="#223a7a" stroke-width="1"/><path d="M196.5 686 q2.500 -3 5 0" fill="none" stroke="#223a7a" stroke-width="1"/><circle cx="203" cy="681" r="6" fill="#4a8ae0" stroke="#1a4a9a" stroke-width=".7"/><path d="M199 679 l4 -3 l3 3 l-2 4z" fill="#50c050"/><circle cx="219" cy="688" r="2.600" fill="#cfe4ff" stroke="#223a7a" stroke-width="1"/><circle cx="225" cy="688" r="2.600" fill="#cfe4ff" stroke="#223a7a" stroke-width="1"/><path d="M219.5 686 q2.500 -3 5 0" fill="none" stroke="#223a7a" stroke-width="1"/><path d="M224 682 l6 -6 m-4 0 h4 v4 M224 682 l7 2 m-3 -2.500 l3 2.500 l-3 2" fill="none" stroke="#2060e0" stroke-width="1.300"/><g transform="translate(91,766) scale(0.95)"><path d="M-8 -9 H4 L2 -3 H-1 V8 Q-2 10 -3 8 V-3 H-6Z" fill="#b8b8b8" stroke="#555" stroke-width=".8"/><path d="M-6 -8 H-3 L-4 -3 H-5Z" fill="#f4f4f4"/><path d="M4 -6 H8 V5 L5 8 H4Z" fill="#d8d8d8" stroke="#555" stroke-width=".8"/><path d="M4 4 L7 6 L5 9 L3 7Z" fill="#f0c020" stroke="#806000" stroke-width=".6"/></g><path d="M150 760 Q156 752 163 757 Q168 762 162 766 Q168 772 160 776 Q150 778 147 770 Q145 764 150 760Z" fill="#fff" stroke="#111" stroke-width="2"/><rect x="147" y="755" width="4" height="4" fill="#fff" stroke="#e02020" stroke-width="1"/><path d="M228 760 l9 -4 l10 3 v5 l-9 4 l-10 -3z" fill="#6a8ad8" stroke="#2a3a7a" stroke-width=".8"/><path d="M234 758 l4 -1.500 l4 1.500 l-4 2z" fill="#d8c040" stroke="#6a5a10" stroke-width=".6"/><path d="M232 768 q0 8 8 8 q8 0 8 -6 l-4 -2 q0 4 -4 4 q-4 0 -4 -5z" fill="#6a8ad8" stroke="#2a3a7a" stroke-width=".8"/><g transform="translate(85,796) scale(1)"><path d="M-5 -9 H5 L3 -4 H1.500 V9 Q0 11 -1.500 9 V-4 H-3Z" fill="#c4c4c4" stroke="#555" stroke-width=".8"/><path d="M-3.500 -8 H-1.500 L-2 -4 H-2.500Z" fill="#fff"/></g><path d="M109 789 h8 v6 h-8z" fill="#fff" stroke="#2a58d0" stroke-width="1.200"/><path d="M111 786 q5 -3 8 1 l1.500 -1 v4 h-4 l1.200 -1.200 q-2.500 -2.500 -5.500 -.5z" fill="#2a58d0"/><path d="M109 797 h7 v7 h-7z" fill="#e8eaf4" stroke="#445" stroke-width=".8"/><g transform="translate(123,798) scale(0.9)"><path d="M-5 -9 H5 L3 -4 H1.500 V9 Q0 11 -1.500 9 V-4 H-3Z" fill="#c4c4c4" stroke="#555" stroke-width=".8"/><path d="M-3.500 -8 H-1.500 L-2 -4 H-2.500Z" fill="#fff"/></g><path d="M118 802 l2 1.500 l-1.500 2.500 l-2 -1.500z" fill="#f0c020" stroke="#806000" stroke-width=".5"/><path d="M139 789 h8 v6 h-8z" fill="#fff" stroke="#20a040" stroke-width="1.200"/><path d="M141 786 q5 -3 8 1 l1.500 -1 v4 h-4 l1.200 -1.200 q-2.500 -2.500 -5.500 -.5z" fill="#20a040"/><path d="M139 797 h7 v7 h-7z" fill="#e8eaf4" stroke="#445" stroke-width=".8"/><g transform="translate(153,798) scale(0.9)"><path d="M-5 -9 H5 L3 -4 H1.500 V9 Q0 11 -1.500 9 V-4 H-3Z" fill="#c4c4c4" stroke="#555" stroke-width=".8"/><path d="M-3.500 -8 H-1.500 L-2 -4 H-2.500Z" fill="#fff"/></g><path d="M148 802 l2 1.500 l-1.500 2.500 l-2 -1.500z" fill="#f0c020" stroke="#806000" stroke-width=".5"/><path d="M170 789 h8 v6 h-8z" fill="#fff" stroke="#2a58d0" stroke-width="1.200"/><path d="M172 786 q5 -3 8 1 l1.500 -1 v4 h-4 l1.200 -1.200 q-2.500 -2.500 -5.500 -.5z" fill="#2a58d0"/><path d="M170 797 h7 v7 h-7z" fill="#e8eaf4" stroke="#445" stroke-width=".8"/><g transform="translate(184,798) scale(0.9)"><path d="M-5 -9 H5 L3 -4 H1.500 V9 Q0 11 -1.500 9 V-4 H-3Z" fill="#c4c4c4" stroke="#555" stroke-width=".8"/><path d="M-3.500 -8 H-1.500 L-2 -4 H-2.500Z" fill="#fff"/></g><path d="M179 802 l2 1.500 l-1.500 2.500 l-2 -1.500z" fill="#f0c020" stroke="#806000" stroke-width=".5"/><g transform="translate(214,798) scale(0.9)"><path d="M-5 -9 H5 L3 -4 H1.500 V9 Q0 11 -1.500 9 V-4 H-3Z" fill="#c4c4c4" stroke="#555" stroke-width=".8"/><path d="M-3.500 -8 H-1.500 L-2 -4 H-2.500Z" fill="#fff"/></g><path d="M203 791 q1 -5 6 -4 l-.5 -2 l4 3.500 l-4.500 2.500 l.3 -2 q-3 -.5 -3.300 3z" fill="#2a58d0"/><rect x="237.500" y="785.500" width="15" height="21" fill="#f4f4f4" stroke="#888" stroke-width="1"/><g transform="translate(248,798) scale(0.85)"><path d="M-5 -9 H5 L3 -4 H1.500 V9 Q0 11 -1.500 9 V-4 H-3Z" fill="#c4c4c4" stroke="#555" stroke-width=".8"/><path d="M-3.500 -8 H-1.500 L-2 -4 H-2.500Z" fill="#fff"/></g><rect x="240" y="788" width="4.500" height="9" fill="#d01818"/><path d="M240 799 h5 v5 h-5z" fill="#e8eaf4" stroke="#445" stroke-width=".7"/><g transform="translate(287,798) scale(0.9)"><path d="M-5 -9 H5 L3 -4 H1.500 V9 Q0 11 -1.500 9 V-4 H-3Z" fill="#c4c4c4" stroke="#555" stroke-width=".8"/><path d="M-3.500 -8 H-1.500 L-2 -4 H-2.500Z" fill="#fff"/></g><path d="M273 785 l2.500 3 l3.500 -2.500 l-1 4 l4 1.500 l-4 1.500 l1 4 l-3.500 -2.500 l-2.500 3 l-.5 -4 l-4 0 l3 -2.800 l-2.500 -3.200 l4 .5z" fill="#f88a18" stroke="#c04808" stroke-width=".5"/><g transform="translate(102,822) scale(0.95)"><path d="M-8 -9 H4 L2 -3 H-1 V8 Q-2 10 -3 8 V-3 H-6Z" fill="#b8b8b8" stroke="#555" stroke-width=".8"/><path d="M-6 -8 H-3 L-4 -3 H-5Z" fill="#f4f4f4"/><path d="M4 -6 H8 V5 L5 8 H4Z" fill="#d8d8d8" stroke="#555" stroke-width=".8"/><path d="M4 4 L7 6 L5 9 L3 7Z" fill="#f0c020" stroke="#806000" stroke-width=".6"/></g><path d="M119.500 834 h10 v13 q-5 4 -10 0z" fill="#8a8a8a" stroke="#444" stroke-width=".8"/><path d="M119.500 840 l10 -5 M119.500 844.5 l10 -5 M119.500 848.5 l10 -5" stroke="#e8e8e8" stroke-width="1.800"/><path d="M119.500 854 h10 v13 q-5 4 -10 0z" fill="#8a8a8a" stroke="#444" stroke-width=".8"/><path d="M119.500 860 l10 -5 M119.500 864.5 l10 -5 M119.500 868.5 l10 -5" stroke="#e8e8e8" stroke-width="1.800"/><path d="M194 934 v8 m-2 -5.500 l2 -3 l2 3" fill="none" stroke="#222" stroke-width="1.100"/><text x="198" y="938" font-family="Liberation Serif,serif" font-size="8" font-weight="bold" fill="#2040c0">A</text><text x="198" y="946" font-family="Liberation Serif,serif" font-size="8" font-weight="bold" fill="#c02020">Z</text><path d="M207 938 v7 m-1.500 -2.500 l1.500 2.500 l1.500 -2.500" fill="none" stroke="#222" stroke-width="1"/><g transform="translate(227,940) scale(0.8)"><path d="M-5 -9 H5 L3 -4 H1.500 V9 Q0 11 -1.500 9 V-4 H-3Z" fill="#c4c4c4" stroke="#555" stroke-width=".8"/><path d="M-3.500 -8 H-1.500 L-2 -4 H-2.500Z" fill="#fff"/></g><path d="M226 946 q6 1 9 -8 l2 1.500 l.5 -5.500 l-5 2 l1.800 1.200 q-2.500 6 -7.500 5.500z" fill="#20b0e0" stroke="#1080a8" stroke-width=".5"/><path d="M222 934 l3 2" stroke="#e02020" stroke-width="1.300"/></svg><svg class="r" style="left:718px;top:91px" width="175" height="56" viewBox="718 92 175 56"><defs><radialGradient id="sph" cx=".35" cy=".3" r=".8"><stop offset="0" stop-color="#a8c0ff"/><stop offset=".5" stop-color="#2a4ad0"/><stop offset="1" stop-color="#0a1a70"/></radialGradient></defs><path d="M728 103.500 L728.00 96.50 A7 7 0 0 1 734.06 100.00 Z" fill="#f02020"/><path d="M728 103.500 L734.06 100.00 A7 7 0 0 1 734.06 107.00 Z" fill="#f0e020"/><path d="M728 103.500 L734.06 107.00 A7 7 0 0 1 728.00 110.50 Z" fill="#20c020"/><path d="M728 103.500 L728.00 110.50 A7 7 0 0 1 721.94 107.00 Z" fill="#20d0e0"/><path d="M728 103.500 L721.94 107.00 A7 7 0 0 1 721.94 100.00 Z" fill="#2030e0"/><path d="M728 103.500 L721.94 100.00 A7 7 0 0 1 728.00 96.50 Z" fill="#e020d0"/><circle cx="728" cy="103.500" r="3.800" fill="#fff"/><circle cx="728" cy="103.500" r="7" fill="none" stroke="#111" stroke-width="1"/><path d="M740 97 L751 99 L752 107 L746 111 L741 107Z" fill="#f04818" stroke="#222" stroke-width=".7"/><path d="M741 104 L746 107 L752 104 L752 107 L746 111 L741 107Z" fill="#fff"/><path d="M741 106 L746 109.500 L752 106.500 L752 108 L746 111 L741 108Z" fill="#2048d0"/><circle cx="763.500" cy="105" r="6" fill="url(#sph)"/><path d="M765 99 q3 -4 6 -2 l-1 -2 m1 2 l-2.500 .5" fill="none" stroke="#222" stroke-width="1"/><path d="M777 110 L784 100 L787 102.500 L780 112Z" fill="#f4f4f4" stroke="#555" stroke-width=".8"/><path d="M784 100 L786.500 96.500 L789.500 99 L787 102.500Z" fill="#f06838" stroke="#803010" stroke-width=".6"/><path d="M792 99 h5 l1.500 2 h7 v2 h-11 l-2.500 7z" fill="#d8a020" stroke="#806000" stroke-width=".7"/><path d="M794.500 103 h13 l-2.500 8 h-13z" fill="#fbd858" stroke="#806000" stroke-width=".7"/><rect x="811.500" y="97.500" width="13" height="12" fill="#3a58d0" stroke="#222" stroke-width=".8"/><rect x="811.500" y="97.500" width="13" height="3" fill="#c8d0f0" stroke="#222" stroke-width=".6"/><text x="818" y="108.500" text-anchor="middle" font-family="Liberation Sans,sans-serif" font-size="8" font-weight="bold" fill="#fff">?</text><circle cx="884" cy="103.5" r="6.5" fill="#c2c5cc" stroke="#c2c5cc" stroke-width="2.400" stroke-dasharray="2.300 1.700"/><circle cx="884" cy="103.5" r="5.3" fill="none" stroke="#c2c5cc" stroke-width="1"/><circle cx="884" cy="103.5" r="2" fill="none" stroke="#c2c5cc" stroke-width="1"/><circle cx="884" cy="103.500" r="2.600" fill="#f5f6fa"/><g transform="translate(-0.5,-1.5)"><path d="M727 126 h4 l2 -3 h7 l2 3 h4 q1 0 1 1 v11 q0 1 -1 1 h-19 q-1 0 -1 -1 v-11 q0 -1 1 -1z" fill="#3a3a3a" stroke="#111" stroke-width=".8"/><circle cx="736.500" cy="132.500" r="5" fill="#222" stroke="#888" stroke-width="1.200"/><circle cx="736.500" cy="132.500" r="2.500" fill="#2a5a4a"/><rect x="728" y="127.500" width="3" height="2" fill="#aaa"/><rect x="755.500" y="119.500" width="22" height="22" fill="#a8d0e8" stroke="#555" stroke-width="1"/><rect x="758.500" y="123.500" width="16" height="14" fill="#fff" stroke="#e02020" stroke-width="1.400"/><path d="M791 136 L801 124" stroke="#223a90" stroke-width="2.500"/><circle cx="791" cy="136.500" r="5" fill="url(#sph)"/><circle cx="798" cy="128" r="4" fill="url(#sph)"/><circle cx="803" cy="122.500" r="2.600" fill="url(#sph)"/></g></svg>
<svg class="r" style="left:895px;top:0" width="1023" height="62" viewBox="895 0 1023 62">
<defs>
<linearGradient id="fB" x1="0" x2="1" y1="0" y2="1"><stop offset="0" stop-color="#38b4ea"/><stop offset=".5" stop-color="#1a6cb4"/><stop offset="1" stop-color="#0c2c54"/></linearGradient>
<linearGradient id="fF" x1="0" x2="1" y1="0" y2="1"><stop offset="0" stop-color="#0c2238"/><stop offset=".5" stop-color="#0a1626"/><stop offset="1" stop-color="#030a14"/></linearGradient>
<radialGradient id="gl" cx=".4" cy=".3" r=".8"><stop offset="0" stop-color="#5f86e0"/><stop offset=".5" stop-color="#1f3fa8"/><stop offset="1" stop-color="#0a1f78"/></radialGradient>
<linearGradient id="un" x1="0" x2="0" y1="0" y2="1"><stop offset="0" stop-color="#55c4dc"/><stop offset=".5" stop-color="#1590ac"/><stop offset="1" stop-color="#0d7a94"/></linearGradient>
<linearGradient id="re" x1="0" x2="0" y1="0" y2="1"><stop offset="0" stop-color="#c8c8c8"/><stop offset="1" stop-color="#989898"/></linearGradient>
<linearGradient id="gp" x1="0" x2="0" y1="0" y2="1"><stop offset="0" stop-color="#0a8a0a"/><stop offset="1" stop-color="#10c010"/></linearGradient>
<linearGradient id="ff" x1="0" x2="0" y1="0" y2="1"><stop offset="0" stop-color="#6cc4ff"/><stop offset="1" stop-color="#1890ee"/></linearGradient>
<radialGradient id="fit" cx=".5" cy=".5" r=".7"><stop offset="0" stop-color="#eef2f2"/><stop offset="1" stop-color="#e2eaf0"/></radialGradient>
<linearGradient id="bx" x1="0" x2="0" y1="0" y2="1"><stop offset="0" stop-color="#fdd668"/><stop offset="1" stop-color="#f2a218"/></linearGradient>
</defs>
<!-- folder -->
<path d="M918.500 13.500 L942 10.500 L944 7.800 L960.800 6.600 L958 53 L924 48Z" fill="url(#fB)"/>
<path d="M909.300 26.500 L949.300 28.400 L957.300 53.500 Q956 55 953 54.500 L917 47.500 Q915 47 914.500 45Z" fill="url(#fF)"/>
<path d="M912 28 L948 30 L930 36Z" fill="#1c4a70" opacity=".5"/>
<!-- globe -->
<circle cx="996.200" cy="30.200" r="26" fill="url(#gl)" stroke="#0a1a70" stroke-width="1"/>
<path d="M988 14 Q996 10 1006 12 L1012 16 L1008 21 L1014 24 L1017 31 L1013 40 L1009 46 L1005 38 L1002 30 L996 28 L990 24 L986 20Z" fill="#dfe6f6"/>
<path d="M973 24 L980 22 L986 28 L982 36 L977 41 L973 34Z" fill="#c8d2f0"/>
<path d="M1012 30 l5 -2 l3 6 l-4 6z M1004 40 l3 4 l-3 4z" fill="#c8d2f0"/>
<path d="M975 20 Q996 2 1017 20 Q996 12 975 20Z" fill="#fff" opacity=".35"/>
<!-- floppy -->
<path d="M1034.500 8.500 H1069 L1079.500 18 V53.500 H1034.500Z" fill="#4868b0" stroke="#000" stroke-width="1.300"/>
<rect x="1043.500" y="9.500" width="24" height="13" fill="#d2d2d2" stroke="#000" stroke-width="1.200"/><rect x="1061" y="10.500" width="5" height="11" fill="#ececec"/>
<rect x="1042.500" y="33.500" width="29" height="19.500" fill="#fff" stroke="#000" stroke-width="1.200"/><path d="M1043 40.500h28M1043 46.500h28" stroke="#000" stroke-width="1.200"/>
<!-- undo -->
<g transform="translate(2.500,2.500)" opacity=".4" fill="#444"><path d="M1112.300 26.200 A20.500 20.500 0 1 1 1115.850 44.600 L1123.700 38.500 A10.500 10.500 0 1 0 1121.900 29 Z"/><path d="M1105.200 29.300 L1116.700 6.200 L1131.800 26.600Z"/></g>
<path d="M1112.300 26.200 A20.500 20.500 0 1 1 1115.850 44.600 L1123.700 38.500 A10.500 10.500 0 1 0 1121.900 29 Z" fill="url(#un)" stroke="#0a5a70" stroke-width="1"/>
<path d="M1105.200 29.300 L1116.700 6.200 L1131.800 26.600Z" fill="#3fb4d0" stroke="#0a5a70" stroke-width="1" stroke-linejoin="round"/>
<!-- redo -->
<g transform="translate(2.500,2.500)" opacity=".3" fill="#444"><path d="M1206.600 26.200 A20.500 20.500 0 1 0 1203.050 44.600 L1195.200 38.500 A10.500 10.500 0 1 1 1197 29 Z"/><path d="M1213.700 29.300 L1202.200 6.200 L1187.100 26.600Z"/></g>
<path d="M1206.600 26.200 A20.500 20.500 0 1 0 1203.050 44.600 L1195.200 38.500 A10.500 10.500 0 1 1 1197 29 Z" fill="url(#re)" stroke="#8a8a8a" stroke-width="1"/>
<path d="M1213.700 29.300 L1202.200 6.200 L1187.100 26.600Z" fill="#c4c4c4" stroke="#8a8a8a" stroke-width="1" stroke-linejoin="round"/>
<!-- add frame -->
<path d="M1272.300 41 V16 H1269 L1274.500 5 L1280 16 H1276.800 V41Z" fill="#2222ee"/>
<path d="M1275 40 L1247 45.500 L1246.500 42.500 L1237.500 48.800 L1248.500 52 L1248 49 L1275.500 43.500Z" fill="#f04858" stroke="#b03040" stroke-width=".5"/>
<path d="M1273 42 L1285 53 L1283 55 L1290.500 56.500 L1289 48.500 L1287 50.500 L1275.500 39.500Z" fill="#3aa884" stroke="#2a7a60" stroke-width=".5"/>
<path d="M1238.600 16.800 H1249.600 V6.200 H1257.300 V16.800 H1268 V24 H1257.300 V35.500 H1249.600 V24 H1238.600Z" fill="url(#gp)"/>
<!-- add target -->
<ellipse cx="1317.500" cy="42" rx="18.600" ry="15" fill="#900"/>
<ellipse cx="1317.500" cy="39.900" rx="18.600" ry="15.500" fill="#e01818"/>
<ellipse cx="1317.500" cy="39.500" rx="14.500" ry="12" fill="#fff"/>
<ellipse cx="1317.500" cy="39" rx="10.500" ry="8.500" fill="#e01818"/>
<ellipse cx="1317.500" cy="38.500" rx="6.500" ry="5" fill="#fff"/>
<ellipse cx="1317.500" cy="38" rx="3" ry="2.300" fill="#e01818"/>
<path d="M1319 37 L1346 9" stroke="#8aa020" stroke-width="1.800"/><path d="M1319 37 L1326 30" stroke="#333" stroke-width="2.400"/>
<ellipse cx="1346" cy="8.500" rx="6.500" ry="2.800" transform="rotate(-45 1346 8.500)" fill="#a8c020" stroke="#708010" stroke-width=".6"/>
<path d="M1299.800 16.800 H1310.400 V6.200 H1318.400 V16.800 H1329 V24 H1318.400 V35.500 H1310.400 V24 H1299.800Z" fill="url(#gp)"/>
<!-- fit -->
<rect x="1374.500" y="6.500" width="48" height="47.500" rx="2.500" fill="url(#fit)" stroke="#a8a8a8" stroke-width="1"/>
<path d="M1374.500 54.500 h48" stroke="#888" stroke-width="1.200"/>
<g fill="#1f4a94"><path d="M1378 10 H1392 L1387.500 14.500 L1393 20 L1388 25 L1382.500 19.500 L1378 24Z"/><path d="M1419.500 10 V24 L1415 19.500 L1409.500 25 L1404.500 20 L1410 14.500 L1405.500 10Z"/><path d="M1378 50.500 V36.500 L1382.500 41 L1388 35.500 L1393 40.500 L1387.500 46 L1392 50.500Z"/><path d="M1419.500 50.500 H1405.500 L1410 46 L1404.500 40.500 L1409.500 35.500 L1415 41 L1419.500 36.500Z"/></g>
<!-- cube -->
<path d="M1435.400 20.400 L1455.800 5 L1481.500 10.600 L1465.600 26.200Z" fill="#2aa0bc" stroke="#065a70" stroke-width="1" stroke-linejoin="round"/>
<path d="M1435.400 20.400 L1465.600 26.200 L1464.700 56.700 L1436.900 47.900Z" fill="#0a8ca4" stroke="#065a70" stroke-width="1" stroke-linejoin="round"/>
<path d="M1465.600 26.200 L1481.500 10.600 L1479.800 40.800 L1464.700 56.700Z" fill="#077890" stroke="#065a70" stroke-width="1" stroke-linejoin="round"/>
<!-- cursor -->
<path d="M1512.600 6.700 V47 L1523.800 38.100 L1529.400 53.200 L1534.800 51.400 L1527.700 36.600 L1541.800 37.200Z" fill="#fff" stroke="#000" stroke-width="1.800" stroke-linejoin="miter"/>
<path d="M1544.500 13 V25 L1547.500 22.500 L1549.500 27 L1551.500 26 L1549.500 21.700 L1553.500 21.700Z" fill="#fff" stroke="#777" stroke-width=".8"/>
<!-- ff -->
<path d="M1600.200 19.500 V42.600 L1618.800 31Z M1618.400 19.500 V42.600 L1637.400 31Z" fill="url(#ff)" stroke="#2a8ee0" stroke-width="1" stroke-linejoin="round"/>
<!-- python -->
<path d="M1708 7.500 Q1720 6 1724 11 Q1726 14 1726 20 V27 Q1725 33 1718 33 H1706 Q1700 33.500 1699 40 V42 H1696 Q1691 41 1691 32 V26 Q1692 20 1698 20 H1712 V18 H1700 V13 Q1701 8 1708 7.500Z" fill="#3872a8" stroke="#28507a" stroke-width=".8"/>
<path d="M1721 54 Q1709 55.500 1705 50.500 Q1703 47.500 1703 42 V35 Q1704 29 1711 29 H1723 Q1729 28.500 1730 22 V20.500 H1733 Q1738 21.500 1738 30 V36 Q1737 42 1731 42 H1717 V44 H1729 V49 Q1728 53.500 1721 54Z" fill="#f6d040" stroke="#c09818" stroke-width=".8"/>
<circle cx="1709" cy="12.500" r="1.800" fill="#fff"/><circle cx="1721" cy="49" r="1.800" fill="#fff"/>
<path d="M1689.700 16.800 H1700.900 V6.200 H1708.300 V16.800 H1719 V24 H1708.300 V35.500 H1700.900 V24 H1689.700Z" fill="url(#gp)"/>
<!-- radiation -->
<circle cx="1799.600" cy="30.100" r="24" fill="#111" stroke="#3a3a3a" stroke-width="1.500"/>
<g fill="#e8d020"><path d="M1799.600 30.100 L1789.600 12.800 A20 20 0 0 1 1809.600 12.800Z"/><path d="M1799.600 30.100 L1779.600 30.100 A20 20 0 0 0 1789.600 47.400Z"/><path d="M1799.600 30.100 L1809.600 47.400 A20 20 0 0 0 1819.600 30.100Z"/></g>
<circle cx="1799.600" cy="30.100" r="5.500" fill="#111"/><circle cx="1799.600" cy="30.100" r="3" fill="#2a2a2a"/>
<path d="M1780 20 Q1799 4 1819 20 Q1799 12 1780 20Z" fill="#fff" opacity=".15"/>
<path d="M1803 35.500 L1807.500 31 L1813 36.500 L1818.500 31 L1823.500 36 L1818 41.500 L1824.500 48 L1819 53.500 L1813 47.500 L1807 53.500 L1802 48.500 L1808 42.500Z" fill="#d81818" stroke="#a01010" stroke-width=".6"/>
<!-- box -->
<path d="M1868.800 30.100 L1884.800 36.300 L1884.800 53.200 L1869.700 43.400Z" fill="#f8b424" stroke="#e08a10" stroke-width=".8"/>
<path d="M1884.800 36.300 L1902.500 28.400 L1901.600 43.400 L1884.800 53.200Z" fill="#f09c14" stroke="#e08a10" stroke-width=".8"/>
<path d="M1868.800 30.100 L1884.800 24 L1902.500 28.400 L1884.800 36.300Z" fill="#c87808"/>
<path d="M1865.200 15.100 L1880.300 6.200 L1891 13.300 L1876.700 21.300Z" fill="url(#bx)" stroke="#e08a10" stroke-width=".8"/>
<path d="M1891 13.300 L1896.300 7.100 L1908.700 18.600 L1903.400 24Z" fill="url(#bx)" stroke="#e08a10" stroke-width=".8"/>
<path d="M1860.800 22.200 L1868.800 30.100 L1884.800 36.300 L1878 31Z" fill="#fdd870" stroke="#e08a10" stroke-width=".8"/>
<path d="M1884.800 36.300 L1910.500 26.600 L1903.400 24 L1887.500 31Z" fill="#fdd870" stroke="#e08a10" stroke-width=".8"/>
<path d="M1876.700 21.300 L1891 13.300 L1903.400 24 L1887.500 31 L1878 31 L1868.800 30.100Z" fill="#f6b42c"/>
</svg><svg class="r" style="left:895px;top:84px" width="343" height="730" viewBox="895 84 343 730"><path d="M924 90.5 l7 -2 v13 l-7 2z" fill="#fafafa" stroke="#cfcfcf" stroke-width=".6"/><path d="M931 88.5 l2 .800 v13 l-2 -.8z" fill="#b8b8b8"/><path d="M949 108V119" stroke="#2222ee" stroke-width="1.600"/><path d="M949 106.5l-3 3.500h6z" fill="#2222ee"/><path d="M949 119L940 121.5" stroke="#e04858" stroke-width="1.600"/><path d="M949 119L954.5 123.5" stroke="#3aa884" stroke-width="1.600"/><circle cx="966" cy="132.5" r="4.2" fill="#e8d040" stroke="#8a7a18" stroke-width="1.400" stroke-dasharray="1.600 1.200"/><circle cx="966" cy="132.5" r="1.300" fill="#8a7a18"/><circle cx="971.5" cy="138.5" r="4.6" fill="#e8d040" stroke="#8a7a18" stroke-width="1.400" stroke-dasharray="1.600 1.200"/><circle cx="971.5" cy="138.5" r="1.300" fill="#8a7a18"/><circle cx="963.5" cy="140.5" r="3.600" fill="#111"/><path d="M962 142l3 -3" stroke="#fff" stroke-width="1.200"/><path d="M989 148V159" stroke="#888" stroke-width="1.600"/><path d="M989 159L980 161.5" stroke="#aaa" stroke-width="1.600"/><path d="M989 159L994.5 163.5" stroke="#999" stroke-width="1.600"/><path d="M1004 177 l3 -7 l6 -2 l3 4 l-4 1 l-3 3 l2 6 l5 2 v3 h-12 v-3z" fill="#e07030" stroke="#8a3a10" stroke-width=".6"/><circle cx="1003.5" cy="180.5" r="3.600" fill="#111"/><path d="M1002 182l3 -3" stroke="#fff" stroke-width="1.200"/><path d="M1021 188 l5 1 l5 4 l4 5 l-2 2 l-5 -4 l-1 5 l-3 -1 l-1 -6 l-4 -3z" fill="#9aa030" stroke="#5a6010" stroke-width=".7"/><path d="M1029 192 l4 -3 l1 2 l-3 3z" fill="#9aa030" stroke="#5a6010" stroke-width=".6"/><path d="M1021 208 l5 1 l5 4 l4 5 l-2 2 l-5 -4 l-1 5 l-3 -1 l-1 -6 l-4 -3z" fill="#9aa030" stroke="#5a6010" stroke-width=".7"/><path d="M1029 212 l4 -3 l1 2 l-3 3z" fill="#9aa030" stroke="#5a6010" stroke-width=".6"/><circle cx="1024" cy="212" r="3.800" fill="#4ac83a" stroke="#2a8a20" stroke-width=".6"/><circle cx="1023" cy="211" r="1.200" fill="#d8ffd0"/><path d="M1021 228 l5 1 l5 4 l4 5 l-2 2 l-5 -4 l-1 5 l-3 -1 l-1 -6 l-4 -3z" fill="#666" stroke="#555" stroke-width=".7"/><path d="M1029 232 l4 -3 l1 2 l-3 3z" fill="#666" stroke="#555" stroke-width=".6"/><path d="M969 248V259" stroke="#2222ee" stroke-width="1.600"/><path d="M969 246.5l-3 3.500h6z" fill="#2222ee"/><path d="M969 259L960 261.5" stroke="#e04858" stroke-width="1.600"/><path d="M969 259L974.5 263.5" stroke="#3aa884" stroke-width="1.600"/><circle cx="986" cy="272.5" r="4.2" fill="#e8d040" stroke="#8a7a18" stroke-width="1.400" stroke-dasharray="1.600 1.200"/><circle cx="986" cy="272.5" r="1.300" fill="#8a7a18"/><circle cx="991.5" cy="278.5" r="4.6" fill="#e8d040" stroke="#8a7a18" stroke-width="1.400" stroke-dasharray="1.600 1.200"/><circle cx="991.5" cy="278.5" r="1.300" fill="#8a7a18"/><circle cx="983.5" cy="280.5" r="3.600" fill="#111"/><path d="M982 282l3 -3" stroke="#fff" stroke-width="1.200"/><path d="M1009 288V299" stroke="#2222ee" stroke-width="1.600"/><path d="M1009 286.5l-3 3.500h6z" fill="#2222ee"/><path d="M1009 299L1000 301.5" stroke="#e04858" stroke-width="1.600"/><path d="M1009 299L1014.5 303.5" stroke="#3aa884" stroke-width="1.600"/><path d="M1023.5 311 l9 -2.500 q2 -.5 2 1.500 v8 l-3.500 4 l-9 1.500 q-1.500 0 -1.500 -1.500 v-8z" fill="#3a8ee8" stroke="#1a4a90" stroke-width=".8"/><path d="M1023.5 311 l9 -2.500 l2 1 l-3.500 4 l-9.500 1.500z" fill="#8ac4ff"/><path d="M1031 315.5 v9 l3.500 -4 v-8.500z" fill="#2468c0"/><path d="M1029 328V339" stroke="#2222ee" stroke-width="1.600"/><path d="M1029 326.5l-3 3.500h6z" fill="#2222ee"/><path d="M1029 339L1020 341.5" stroke="#e04858" stroke-width="1.600"/><path d="M1029 339L1034.5 343.5" stroke="#3aa884" stroke-width="1.600"/><circle cx="1024" cy="332" r="3.800" fill="#4ac83a" stroke="#2a8a20" stroke-width=".6"/><circle cx="1023" cy="331" r="1.200" fill="#d8ffd0"/><path d="M1043.5 351 l9 -2.500 q2 -.5 2 1.500 v8 l-3.500 4 l-9 1.500 q-1.500 0 -1.500 -1.500 v-8z" fill="#3a8ee8" stroke="#1a4a90" stroke-width=".8"/><path d="M1043.5 351 l9 -2.500 l2 1 l-3.500 4 l-9.500 1.500z" fill="#8ac4ff"/><path d="M1051 355.5 v9 l3.500 -4 v-8.500z" fill="#2468c0"/><path d="M940 368 h13 l-3.500 4 h-6z" fill="#555" stroke="#222" stroke-width=".7"/><path d="M944.5 372 h5 v4 q3 1 3 5 q0 4 -3.500 4 h-3 q-3.500 0 -3.500 -4 q0 -4 2 -5z" fill="#777" stroke="#222" stroke-width=".9"/><path d="M945 380 l6 -3 M945 383.5 l6 -3" stroke="#222" stroke-width="1.100"/><path d="M946 371 l-6 6" stroke="#222" stroke-width="1.300"/><path d="M940 388 h13 l-3.500 4 h-6z" fill="#555" stroke="#222" stroke-width=".7"/><path d="M944.5 392 h5 v4 q3 1 3 5 q0 4 -3.500 4 h-3 q-3.500 0 -3.500 -4 q0 -4 2 -5z" fill="#777" stroke="#222" stroke-width=".9"/><path d="M945 400 l6 -3 M945 403.5 l6 -3" stroke="#222" stroke-width="1.100"/><path d="M946 391 l-6 6" stroke="#222" stroke-width="1.300"/><path d="M940 408 h13 l-3.500 4 h-6z" fill="#555" stroke="#222" stroke-width=".7"/><path d="M944.5 412 h5 v4 q3 1 3 5 q0 4 -3.500 4 h-3 q-3.500 0 -3.500 -4 q0 -4 2 -5z" fill="#777" stroke="#222" stroke-width=".9"/><path d="M945 420 l6 -3 M945 423.5 l6 -3" stroke="#222" stroke-width="1.100"/><path d="M946 411 l-6 6" stroke="#222" stroke-width="1.300"/><path d="M940 428 h13 l-3.500 4 h-6z" fill="#555" stroke="#222" stroke-width=".7"/><path d="M944.5 432 h5 v4 q3 1 3 5 q0 4 -3.500 4 h-3 q-3.500 0 -3.500 -4 q0 -4 2 -5z" fill="#777" stroke="#222" stroke-width=".9"/><path d="M945 440 l6 -3 M945 443.5 l6 -3" stroke="#222" stroke-width="1.100"/><path d="M946 431 l-6 6" stroke="#222" stroke-width="1.300"/><path d="M940 448 h13 l-3.500 4 h-6z" fill="#555" stroke="#222" stroke-width=".7"/><path d="M944.5 452 h5 v4 q3 1 3 5 q0 4 -3.500 4 h-3 q-3.500 0 -3.500 -4 q0 -4 2 -5z" fill="#777" stroke="#222" stroke-width=".9"/><path d="M945 460 l6 -3 M945 463.5 l6 -3" stroke="#222" stroke-width="1.100"/><path d="M946 451 l-6 6" stroke="#222" stroke-width="1.300"/><path d="M940 468 h13 l-3.500 4 h-6z" fill="#555" stroke="#222" stroke-width=".7"/><path d="M944.5 472 h5 v4 q3 1 3 5 q0 4 -3.500 4 h-3 q-3.500 0 -3.500 -4 q0 -4 2 -5z" fill="#777" stroke="#222" stroke-width=".9"/><path d="M945 480 l6 -3 M945 483.5 l6 -3" stroke="#222" stroke-width="1.100"/><path d="M946 471 l-6 6" stroke="#222" stroke-width="1.300"/><path d="M940 488 h13 l-3.500 4 h-6z" fill="#555" stroke="#222" stroke-width=".7"/><path d="M944.5 492 h5 v4 q3 1 3 5 q0 4 -3.500 4 h-3 q-3.500 0 -3.500 -4 q0 -4 2 -5z" fill="#777" stroke="#222" stroke-width=".9"/><path d="M945 500 l6 -3 M945 503.5 l6 -3" stroke="#222" stroke-width="1.100"/><path d="M946 491 l-6 6" stroke="#222" stroke-width="1.300"/><path d="M942 508 h8 l3.500 3.500 v12.500 h-11.500z" fill="#fcfcfc" stroke="#8a8a8a" stroke-width=".9"/><path d="M950 508 v3.500 h3.500" fill="#ddd" stroke="#8a8a8a" stroke-width=".7"/><path d="M944 511.5h6M944 514h7M944 516.5h7M944 519h7M944 521.5h7" stroke="#a8a8a8" stroke-width="1"/><path d="M939 510 h5 v-3 l6 5 l-6 5 v-3 h-5z" fill="#f0a020" stroke="#a86808" stroke-width=".7"/><path d="M965 529 h12 v3.500 h-12z M962 534 h12 v3.500 h-12z M960 539 h12 v3.500 h-12z" fill="#bdbdbd" stroke="#666" stroke-width=".8"/><path d="M963 530 l5 2 l-3 2z" fill="#f0d890" stroke="#a08030" stroke-width=".5"/><path d="M958 530 h5 v-3 l6 5 l-6 5 v-3 h-5z" fill="#f0a020" stroke="#a86808" stroke-width=".7"/><path d="M965 549 h12 v3.500 h-12z M962 554 h12 v3.500 h-12z M960 559 h12 v3.500 h-12z" fill="#bdbdbd" stroke="#666" stroke-width=".8"/><path d="M963 550 l5 2 l-3 2z" fill="#f0d890" stroke="#a08030" stroke-width=".5"/><path d="M965 569 h12 v3.500 h-12z M962 574 h12 v3.500 h-12z M960 579 h12 v3.500 h-12z" fill="#bdbdbd" stroke="#666" stroke-width=".8"/><path d="M963 570 l5 2 l-3 2z" fill="#f0d890" stroke="#a08030" stroke-width=".5"/><path d="M965 589 h12 v3.500 h-12z M962 594 h12 v3.500 h-12z M960 599 h12 v3.500 h-12z" fill="#bdbdbd" stroke="#666" stroke-width=".8"/><path d="M963 590 l5 2 l-3 2z" fill="#f0d890" stroke="#a08030" stroke-width=".5"/><path d="M965 609 h12 v3.500 h-12z M962 614 h12 v3.500 h-12z M960 619 h12 v3.500 h-12z" fill="#bdbdbd" stroke="#666" stroke-width=".8"/><path d="M963 610 l5 2 l-3 2z" fill="#f0d890" stroke="#a08030" stroke-width=".5"/><path d="M965 629 h12 v3.500 h-12z M962 634 h12 v3.500 h-12z M960 639 h12 v3.500 h-12z" fill="#bdbdbd" stroke="#666" stroke-width=".8"/><path d="M963 630 l5 2 l-3 2z" fill="#f0d890" stroke="#a08030" stroke-width=".5"/><path d="M965 649 h12 v3.500 h-12z M962 654 h12 v3.500 h-12z M960 659 h12 v3.500 h-12z" fill="#bdbdbd" stroke="#666" stroke-width=".8"/><path d="M963 650 l5 2 l-3 2z" fill="#f0d890" stroke="#a08030" stroke-width=".5"/><path d="M942 668 h8 l3.500 3.500 v12.500 h-11.500z" fill="#fcfcfc" stroke="#8a8a8a" stroke-width=".9"/><path d="M950 668 v3.500 h3.500" fill="#ddd" stroke="#8a8a8a" stroke-width=".7"/><path d="M944 671.5h6M944 674h7M944 676.5h7M944 679h7M944 681.5h7" stroke="#a8a8a8" stroke-width="1"/><path d="M942 688 h8 l3.500 3.500 v12.500 h-11.500z" fill="#fcfcfc" stroke="#8a8a8a" stroke-width=".9"/><path d="M950 688 v3.500 h3.500" fill="#ddd" stroke="#8a8a8a" stroke-width=".7"/><path d="M944 691.5h6M944 694h7M944 696.5h7M944 699h7M944 701.5h7" stroke="#a8a8a8" stroke-width="1"/><path d="M942 708 h8 l3.500 3.500 v12.500 h-11.500z" fill="#fcfcfc" stroke="#8a8a8a" stroke-width=".9"/><path d="M950 708 v3.500 h3.500" fill="#ddd" stroke="#8a8a8a" stroke-width=".7"/><path d="M944 711.5h6M944 714h7M944 716.5h7M944 719h7M944 721.5h7" stroke="#a8a8a8" stroke-width="1"/><path d="M942 728 h8 l3.500 3.500 v12.500 h-11.500z" fill="#fcfcfc" stroke="#8a8a8a" stroke-width=".9"/><path d="M950 728 v3.500 h3.500" fill="#ddd" stroke="#8a8a8a" stroke-width=".7"/><path d="M944 731.5h6M944 734h7M944 736.5h7M944 739h7M944 741.5h7" stroke="#a8a8a8" stroke-width="1"/><path d="M942 748 h8 l3.500 3.500 v12.500 h-11.500z" fill="#fcfcfc" stroke="#8a8a8a" stroke-width=".9"/><path d="M950 748 v3.500 h3.500" fill="#ddd" stroke="#8a8a8a" stroke-width=".7"/><path d="M944 751.5h6M944 754h7M944 756.5h7M944 759h7M944 761.5h7" stroke="#a8a8a8" stroke-width="1"/><path d="M942 768 h8 l3.500 3.500 v12.500 h-11.500z" fill="#fcfcfc" stroke="#8a8a8a" stroke-width=".9"/><path d="M950 768 v3.500 h3.500" fill="#ddd" stroke="#8a8a8a" stroke-width=".7"/><path d="M944 771.5h6M944 774h7M944 776.5h7M944 779h7M944 781.5h7" stroke="#a8a8a8" stroke-width="1"/><path d="M942 788 h8 l3.500 3.500 v12.500 h-11.500z" fill="#fcfcfc" stroke="#8a8a8a" stroke-width=".9"/><path d="M950 788 v3.500 h3.500" fill="#ddd" stroke="#8a8a8a" stroke-width=".7"/><path d="M944 791.5h6M944 794h7M944 796.5h7M944 799h7M944 801.5h7" stroke="#a8a8a8" stroke-width="1"/></svg><svg class="r" style="left:895px;top:940px" width="200" height="30" viewBox="895 940 200 30"><g fill="#2a8ee8" stroke="#2a8ee8" stroke-width=".8" stroke-linejoin="round"><path d="M906.500 949.500 h1.500 v11 h-1.500z M917 949.500 v11 l-8.500 -5.500z" fill="#5ab0f4"/><path d="M939.500 950.500 h2.500 v9 h-2.500z M944 950.500 h2.500 v9 h-2.500z" fill="#5ab0f4"/><path d="M970.500 950 v10 l8 -5z"/><path d="M999.500 950.500 v9 l6 -4.500z M1005.500 950.500 v9 l6 -4.500z"/><path d="M1030.500 949.500 v11 l8.500 -5.500z M1040 949.500 h1.500 v11 h-1.500z" fill="#5ab0f4"/></g><path d="M1059.500 958.500 Q1060 950.500 1067 950.500 Q1072.500 951 1073.500 956" fill="none" stroke="#1a6cc8" stroke-width="2.600"/><path d="M1069.500 955.500 h8.500 l-3.500 5.500z" fill="#1a6cc8"/></svg>
<svg class="r" style="left:329px;top:84px" width="381" height="874" viewBox="329 84 381 874">
<defs>
<filter id="spk" x="0" y="0" width="100%" height="100%" color-interpolation-filters="sRGB">
<feTurbulence type="fractalNoise" baseFrequency="0.75" numOctaves="2" seed="5" result="n"/>
<feColorMatrix in="n" type="matrix" values="0 0 0 0 1  0 0 0 0 1  0 0 0 0 1  8 0 0 0 -4.2" result="m"/>
<feGaussianBlur in="SourceGraphic" stdDeviation="2.500" result="b"/>
<feComposite in="m" in2="b" operator="in"/>
</filter>
<linearGradient id="gBoxR" x1="0" x2="1" y1="0" y2="1"><stop offset="0" stop-color="#fdfdfd"/><stop offset=".6" stop-color="#f3f3f3"/><stop offset="1" stop-color="#e2e2e2"/></linearGradient>
<clipPath id="gridclip"><path d="M329 541.400 L518 508 L711 536 L711 958 L329 958Z"/></clipPath>
<clipPath id="silclip" transform="translate(300,84) scale(0.33368)"><path d="M445 430 L470 380 L500 360 L560 365 L600 355 L650 340 L700 350 L760 330 L810 345 L850 380 L890 430 L930 500 L960 580 L975 650 L968 688 L973 749 L963 799 L943 849 L913 889 L938 914 L943 939 L983 969 L1043 1015 L1094 1065 L1135 1101 L1140 1131 L1100 1171 L1040 1231 L960 1331 L870 1421 L800 1481 L790 1541 L780 1601 L770 1721 L780 1761 L785 1801 L760 1841 L700 1871 L600 1886 L500 1881 L420 1866 L375 1831 L362 1781 L380 1741 L430 1701 L460 1671 L440 1641 L440 1581 L390 1556 L390 1511 L370 1481 L358 1381 L355 1281 L370 1191 L395 1141 L416 1080 L436 1050 L461 1030 L473 1007 L511 980 L546 929 L536 884 L521 839 L506 773 L504 723 L491 688 L470 620 L455 540Z"/></clipPath>
</defs>
<g clip-path="url(#gridclip)">
<rect x="329" y="500" width="382" height="460" fill="#a1a8b3"/>
<path d="M329.0 543.9L711.0 476.2 M329.0 546.5L711.0 477.3 M329.0 549.2L711.0 478.5 M329.0 552.0L711.0 479.7 M329.0 558.1L711.0 482.3 M329.0 561.3L711.0 483.7 M329.0 564.7L711.0 485.2 M329.0 568.3L711.0 486.7 M329.0 576.0L711.0 490.0 M329.0 580.2L711.0 491.9 M329.0 584.7L711.0 493.8 M329.0 589.4L711.0 495.8 M329.0 599.6L711.0 500.2 M329.0 605.3L711.0 502.6 M329.0 611.3L711.0 505.2 M329.0 617.7L711.0 508.0 M329.0 632.0L711.0 514.1 M329.0 639.9L711.0 517.6 M329.0 648.5L711.0 521.3 M329.0 657.8L711.0 525.3 M329.0 679.0L711.0 534.4 M329.0 691.1L711.0 539.6 M329.0 704.4L711.0 545.3 M329.0 719.1L711.0 551.7 M329.0 753.7L711.0 566.6 M329.0 774.3L711.0 575.4 M329.0 797.5L711.0 585.5 M329.0 824.2L711.0 596.9 M329.0 890.7L711.0 625.6 M329.0 933.0L711.0 643.8 M329.0 983.8L711.0 665.7 M329.0 1045.9L711.0 692.4 M329.0 1223.3L711.0 768.8 M329.0 1356.4L711.0 826.1 M329.0 1542.6L711.0 906.4 M329.0 1822.0L711.0 1026.7 M329.0 482.1L711.0 538.1 M329.0 483.1L711.0 540.2 M329.0 484.2L711.0 542.3 M329.0 485.3L711.0 544.5 M329.0 487.6L711.0 549.1 M329.0 488.8L711.0 551.5 M329.0 490.1L711.0 554.1 M329.0 491.5L711.0 556.7 M329.0 494.3L711.0 562.3 M329.0 495.8L711.0 565.3 M329.0 497.4L711.0 568.5 M329.0 499.0L711.0 571.8 M329.0 502.6L711.0 578.8 M329.0 504.5L711.0 582.6 M329.0 506.5L711.0 586.5 M329.0 508.6L711.0 590.7 M329.0 513.2L711.0 599.7 M329.0 515.6L711.0 604.6 M329.0 518.2L711.0 609.8 M329.0 521.0L711.0 615.3 M329.0 527.0L711.0 627.2 M329.0 530.4L711.0 633.8 M329.0 533.9L711.0 640.8 M329.0 537.7L711.0 648.3 M329.0 546.1L711.0 665.0 M329.0 550.8L711.0 674.4 M329.0 555.9L711.0 684.4 M329.0 561.4L711.0 695.4 M329.0 573.9L711.0 720.2 M329.0 581.1L711.0 734.4 M329.0 589.0L711.0 750.1 M329.0 597.8L711.0 767.5 M329.0 618.4L711.0 808.3 M329.0 630.7L711.0 832.7 M329.0 644.6L711.0 860.3 M329.0 660.6L711.0 892.0 M329.0 700.7L711.0 971.5 M329.0 726.4L711.0 1022.3 M329.0 757.3L711.0 1083.6 M329.0 795.2L711.0 1158.8 M329.0 904.9L711.0 1376.3 M329.0 988.4L711.0 1541.7 M329.0 1107.0L711.0 1776.8 M329.0 1288.9L711.0 2137.3" stroke="#8e949f" stroke-width=".5" fill="none"/>
<path d="M329.0 541.4L711.0 475.1 M329.0 555.0L711.0 481.0 M329.0 572.1L711.0 488.3 M329.0 594.3L711.0 497.9 M329.0 624.6L711.0 511.0 M329.0 668.0L711.0 529.6 M329.0 735.5L711.0 558.7 M329.0 854.9L711.0 610.1 M329.0 1123.5L711.0 725.9 M329.0 2287.7L711.0 1227.3 M329.0 481.1L711.0 536.2 M329.0 486.4L711.0 546.7 M329.0 492.8L711.0 559.5 M329.0 500.8L711.0 575.2 M329.0 510.8L711.0 595.1 M329.0 523.9L711.0 621.1 M329.0 541.7L711.0 656.4 M329.0 567.4L711.0 707.2 M329.0 607.5L711.0 786.7 M329.0 679.1L711.0 928.6 M329.0 843.0L711.0 1253.5 M329.0 1603.1L711.0 2759.9" stroke="#7e848f" stroke-width=".9" fill="none"/>
</g>
<path d="M676 787 L711 765" stroke="#4aa24a" stroke-width="1.200"/><path d="M600 938 L632 958" stroke="#b04040" stroke-width="1.200"/>
<!-- box : 3x frame V3 origin (300,653) -->
<g transform="translate(300,653) scale(0.33368)" stroke="#000" stroke-width="3" stroke-linejoin="round">
<path d="M185 93 L780 -30 L1137 97 L652 330Z" fill="#9a9a9a"/>
<path d="M185 93 L652 330 L652 930 L500 930 L208 688Z" fill="#adadad"/>
<path d="M652 330 L1137 97 L1115 700 L810 930 L652 930Z" fill="url(#gBoxR)"/>
<path d="M652 330 L208 688 M1137 97 L712 930 M652 330 L662 170" fill="none"/>
</g>
<g transform="translate(300,653) scale(0.33368)">
<path d="M660 695 V600" stroke="#0000e6" stroke-width="9"/><path d="M644 612 L660 560 L676 612Z" fill="#0000e6"/>
<path d="M660 695 L730 652" stroke="#063806" stroke-width="9"/><path d="M716 636 L765 630 L732 668Z" fill="#063806"/>
<path d="M660 695 L735 745" stroke="#e60000" stroke-width="9"/><path d="M742 728 L770 768 L722 758Z" fill="#e60000"/>
<circle cx="660" cy="695" r="11" fill="#0a0a50"/>
<path d="M198 720 V800 L270 795 M198 800 L262 822" fill="none" stroke="#80858e" stroke-width="2"/><g font-family="Liberation Sans,sans-serif" font-size="34" fill="#80858e"><text x="200" y="722">z</text><text x="268" y="790">y</text><text x="268" y="822">x</text></g>
</g>
<!-- bust -->
<g transform="translate(300,84) scale(0.33368)"><path d="M445 430 L470 380 L500 360 L560 365 L600 355 L650 340 L700 350 L760 330 L810 345 L850 380 L890 430 L930 500 L960 580 L975 650 L968 688 L973 749 L963 799 L943 849 L913 889 L938 914 L943 939 L983 969 L1043 1015 L1094 1065 L1135 1101 L1140 1131 L1100 1171 L1040 1231 L960 1331 L870 1421 L800 1481 L790 1541 L780 1601 L770 1721 L780 1761 L785 1801 L760 1841 L700 1871 L600 1886 L500 1881 L420 1866 L375 1831 L362 1781 L380 1741 L430 1701 L460 1671 L440 1641 L440 1581 L390 1556 L390 1511 L370 1481 L358 1381 L355 1281 L370 1191 L395 1141 L416 1080 L436 1050 L461 1030 L473 1007 L511 980 L546 929 L536 884 L521 839 L506 773 L504 723 L491 688 L470 620 L455 540Z" fill="#050505"/></g>
<g clip-path="url(#silclip)"><g filter="url(#spk)"><g transform="translate(300,84) scale(0.33368)" fill="#fff">
<!-- light map: opacity = density of white speckle -->
<path d="M445 430 L470 380 L500 360 L560 365 L600 355 L650 340 L700 350 L760 330 L810 345 L850 380 L890 430 L930 500 L960 580 L975 650 L968 688 L973 749 L963 799 L943 849 L913 889 L938 914 L943 939 L983 969 L1043 1015 L1094 1065 L1135 1101 L1140 1131 L1100 1171 L1040 1231 L960 1331 L870 1421 L800 1481 L790 1541 L780 1601 L770 1721 L780 1761 L785 1801 L760 1841 L700 1871 L600 1886 L500 1881 L420 1866 L375 1831 L362 1781 L380 1741 L430 1701 L460 1671 L440 1641 L440 1581 L390 1556 L390 1511 L370 1481 L358 1381 L355 1281 L370 1191 L395 1141 L416 1080 L436 1050 L461 1030 L473 1007 L511 980 L546 929 L536 884 L521 839 L506 773 L504 723 L491 688 L470 620 L455 540Z" opacity=".2"/>
<!-- face -->
<path d="M520 700 L600 690 L720 690 L770 740 L775 810 L740 880 L680 930 L600 935 L550 890 L520 820Z" opacity=".5"/>
<path d="M600 740 L700 730 L740 800 L700 880 L620 890 L580 820Z" opacity=".45"/>
<path d="M500 480 L560 470 L640 490 L690 560 L700 670 L500 675Z" opacity=".35"/>
<path d="M780 700 L940 690 L960 800 L920 880 L860 900 L800 860Z" opacity=".15"/>
<path d="M560 960 L700 965 L900 935 L930 985 L800 1040 L600 1040 L500 1010Z" opacity=".22"/>
<!-- torso -->
<path d="M934 1025 L1097 1068 L1136 1115 L1123 1154 L1054 1231 L977 1325 L891 1411 L806 1488 L703 1556 L651 1565 L660 1488 L780 1308 L848 1179 L900 1077Z" opacity=".8"/>
<path d="M920 1120 L1060 1130 L1000 1230 L900 1340 L800 1440 L720 1500 L740 1400 L840 1260Z" opacity=".5"/>
<path d="M703 1068 L797 1042 L848 1094 L814 1197 L746 1291 L677 1351 L660 1265 L694 1162Z" opacity=".55"/>
<path d="M531 1265 L660 1368 L660 1522 L600 1556 L514 1488Z" opacity=".45"/>
<path d="M420 1100 L560 1080 L600 1250 L520 1290 L500 1480 L400 1470 L370 1330Z" opacity=".18"/>
<path d="M711 1522 L801 1505 L793 1659 L776 1745 L720 1694Z" opacity=".6"/>
<path d="M450 1600 L700 1640 L710 1700 L470 1660Z" opacity=".12"/>
<path d="M386 1750 L600 1730 L770 1770 L770 1820 L700 1865 L520 1872 L400 1845Z" opacity=".22"/>
<path d="M1040 1020 L1130 1100 L1100 1160 L1040 1100Z" opacity=".2"/>
</g></g></g>
<g clip-path="url(#silclip)"><g transform="translate(300,84) scale(0.33368)" fill="none" stroke="#060606" stroke-linecap="round" stroke-linejoin="round">
<path d="M900 1059 L848 1179 L780 1308 L660 1488" stroke-width="22"/>
<path d="M640 1110 L730 1165 L755 1215 L690 1265 L645 1210Z" fill="#060606" stroke-width="6" opacity=".75"/>
<path d="M430 1180 L420 1460 M475 1170 L470 1470 M520 1290 L515 1480" stroke-width="10" opacity=".8"/>
<path d="M390 1496 L651 1565 L806 1492" stroke-width="16"/>
<path d="M445 1600 L640 1650 L790 1610 M450 1650 L640 1700 L785 1665" stroke-width="12"/>
<path d="M547 932 L620 962 L720 952 L860 922 L940 902" stroke-width="26"/>
<path d="M700 1000 L760 1040 L700 1068" stroke-width="18"/>
<path d="M560 790 L600 800 M600 870 L650 880" stroke-width="16"/>
</g></g>
<!-- cyan toolpath -->
<g transform="translate(300,84) scale(0.33368)">
<g fill="none" stroke="#00f0f0" stroke-width="4">
<ellipse cx="660" cy="684" rx="358" ry="13"/>
<path d="M302 684 Q400 668 500 670 L500 698 Q400 702 302 684Z" fill="#00f0f0"/>
<path d="M410 680 V480 Q430 390 500 360 Q560 380 600 355 Q650 330 700 350 Q760 320 820 345 Q900 420 960 520 Q1000 580 1015 680"/>
<path d="M425 680 V490 Q450 400 520 375 Q600 390 640 360 Q720 340 790 350 Q880 420 940 530 Q985 600 1000 680"/>
<path d="M445 672 V500 Q470 420 540 390 Q610 400 650 375 Q730 360 780 380 Q850 440 900 540 Q950 600 980 675"/>
<path d="M465 670 V510 Q500 430 560 410 Q620 405 660 395 Q730 385 770 420 Q820 470 860 540 Q910 600 945 672"/>
<path d="M495 668 V500 Q520 440 600 420 Q680 400 740 440 Q790 480 820 560 Q880 600 905 668"/>
<path d="M560 665 V480 Q600 420 680 420 Q740 450 770 500 Q800 560 830 600 V665"/>
<path d="M652 665 V500 Q668 460 684 500 V665"/>
<path d="M760 665 V635 Q772 610 785 635 V665"/>
<path d="M418 676 V470 Q440 380 490 352 Q530 340 560 362 Q590 340 630 346 Q670 318 715 340 Q770 308 830 338 Q880 372 905 425 Q950 480 972 560 Q1004 620 1010 676" stroke-width="3"/>
<path d="M480 668 V505 Q505 450 545 430 M600 420 Q640 380 700 395 Q760 400 800 470 Q850 520 880 600 L890 668 M520 668 V490 M455 500 Q470 440 500 420 M700 350 Q740 370 760 420 Q800 440 830 500 Q870 540 900 600 Q930 630 940 668 M810 345 Q850 400 880 440 Q920 500 950 570" stroke-width="3"/>
</g>
<path d="M625 175 V665" stroke="#f0f000" stroke-width="4"/>
<path d="M537 345 V362" stroke="#e02020" stroke-width="3"/>
</g>
<!-- title -->
<rect x="329" y="84" width="91" height="18" fill="#a3bbdc"/>
<path d="M409.500 86V100" stroke="#000" stroke-width="1"/><path d="M411.500 91.500h7l-3.500 4z" fill="#000"/>
<text x="336" y="97" font-family="Liberation Sans,sans-serif" font-size="12" font-weight="bold" textLength="65" lengthAdjust="spacingAndGlyphs">Perspective</text>
</svg>
<svg class="r" style="left:1239px;top:62px" width="679" height="840" viewBox="0 0 679 840">
<defs>
<linearGradient id="gL2" gradientUnits="userSpaceOnUse" x1="120" y1="450" x2="440" y2="540"><stop offset="0" stop-color="#bf5a25"/><stop offset=".08" stop-color="#e67834"/><stop offset=".24" stop-color="#f0823c"/><stop offset=".45" stop-color="#dc6e2f"/><stop offset=".7" stop-color="#cf662b"/><stop offset="1" stop-color="#c45f28"/></linearGradient>
<linearGradient id="gL3" gradientUnits="userSpaceOnUse" x1="800" y1="440" x2="600" y2="600"><stop offset="0" stop-color="#c4602a"/><stop offset=".3" stop-color="#e27332"/><stop offset=".6" stop-color="#ea7b38"/><stop offset="1" stop-color="#cf662c"/></linearGradient>
<linearGradient id="gW" gradientUnits="userSpaceOnUse" x1="1150" y1="760" x2="820" y2="980"><stop offset="0" stop-color="#c8632a"/><stop offset=".4" stop-color="#e57634"/><stop offset=".8" stop-color="#e97a37"/><stop offset="1" stop-color="#d0672c"/></linearGradient>
<linearGradient id="gCyl" x1="0" x2="1"><stop offset="0" stop-color="#1a1a1a"/><stop offset=".55" stop-color="#262626"/><stop offset="1" stop-color="#141414"/></linearGradient>
<linearGradient id="gCream" x1="0" x2="1"><stop offset="0" stop-color="#d9d4bb"/><stop offset=".45" stop-color="#f1edd8"/><stop offset="1" stop-color="#e6e1c9"/></linearGradient>
<linearGradient id="gSp" x1="0" x2="0" y1="0" y2="1"><stop offset="0" stop-color="#cfcfcf"/><stop offset="1" stop-color="#b4b4b4"/></linearGradient>
<linearGradient id="gNose" x1="0" x2="0" y1="0" y2="1"><stop offset="0" stop-color="#d8d8d8"/><stop offset=".5" stop-color="#a8a8a8"/><stop offset="1" stop-color="#8a8a8a"/></linearGradient>
<linearGradient id="gOrP" x1="0" x2="1"><stop offset="0" stop-color="#d96c2e"/><stop offset=".5" stop-color="#f3853f"/><stop offset="1" stop-color="#d4692d"/></linearGradient>
<linearGradient id="gBust" x1="0" x2="1"><stop offset="0" stop-color="#c0c0e0"/><stop offset=".5" stop-color="#f2f2fb"/><stop offset="1" stop-color="#c6c6e2"/></linearGradient>
</defs>
<g transform="scale(0.33368)">
<!-- ===== rail (R3 frame) ===== -->
<g transform="translate(0,1554)">
<path d="M0 572 L320 546 L350 437 L1038 376 L1038 432 L1130 428 L1220 420 L1335 432 L1340 520 L1300 530 L1300 672 L0 858Z" fill="#414141"/>
<path d="M352 437 L1038 376 L1038 384 L480 436Z" fill="#4c4c4c"/>
<path d="M482 520 L1040 446 L1335 434 L1338 446 L1300 441 L484 530Z" fill="#2b2b2b"/>
<path d="M1300 441 L1340 446 L1340 520 L1300 530Z" fill="#383838"/>
<path d="M520 607 L1300 520 L1300 527 L520 616Z" fill="#2d2d2d"/>
<path d="M0 636 L320 624 L320 634 L0 648Z" fill="#2b2b2b"/>
<path d="M0 596 L320 574 L320 580 L0 603Z" fill="#303030"/>
<path d="M1040 436 L1130 430 L1130 440 L1040 446Z" fill="#2a2a2a"/>
<path d="M1075 715 L1215 690 L1290 675 L1400 715 L1215 760Z" fill="#2c2c2c"/>
<path d="M1150 706 L1290 682 L1365 712 L1228 740Z" fill="#434343"/>
<!-- robot base -->
<path d="M0 60 L300 50 L300 372 Q150 432 0 425Z" fill="url(#gCyl)"/>
<path d="M0 0 L285 0 L308 35 L300 58 Q150 75 0 72Z" fill="#e97a37"/>
<path d="M0 0 L285 0 L303 33 Q150 50 0 46Z" fill="#cb642b"/>
<path d="M0 425 Q150 432 300 372 L352 436 L300 472 L0 502Z" fill="#cf662b"/>
<path d="M15 455 L205 440 L232 478 L10 500Z" fill="#b55825"/>
<path d="M30 470 L200 456 L222 482 L25 498Z" fill="#f0843f"/>
<path d="M232 440 L300 400 L345 440 L262 470Z" fill="#b55825"/>
<path d="M0 502 L232 488 L352 437 L482 492 L482 520 L455 532 L320 546 L0 573Z" fill="#f3873f"/>
<path d="M0 520 L235 505 L320 530 L0 545Z" fill="#d96c2e"/>
<path d="M345 545 L455 532 L455 740 L360 748Z" fill="#f08440"/>
<path d="M320 546 L345 545 L360 748 L320 735Z" fill="#cf662b"/>
<path d="M455 600 L515 597 L515 672 L455 680Z" fill="#f3873f"/>
</g>
<!-- ===== link1 bulb ===== -->
<path d="M200 1004 L300 1074 L350 1094 L405 1139 L440 1224 L452 1324 L432 1424 L385 1504 L310 1566 L308 1594 L0 1604 L0 1004Z" fill="#db6d2e"/>
<path d="M300 1074 L350 1094 L405 1139 L440 1224 L452 1324 L432 1424 L400 1480 L390 1380 L370 1250Z" fill="#e37432"/><path d="M300 1074 L350 1094 L372 1250 L390 1380 L400 1480 L350 1530 L345 1300Z" fill="#f0863f" opacity=".8"/>
<path d="M0 1509 L130 1504 L230 1490 L300 1580 L0 1600Z" fill="#b95a26"/>
<!-- ===== motor blob ===== -->
<path d="M195 190 L200 165 L225 135 L255 120 L262 70 L285 30 L310 10 L335 3 L470 3 L420 70 L340 100 L270 150 L225 235 L205 225Z" fill="#1b1b1b"/>
<!-- ===== link 3 ===== -->
<path d="M405 85 L440 40 L480 3 L545 3 L535 42 L562 15 L612 15 L630 38 L614 85 L650 135 L700 222 L735 225 L780 245 L768 292 L790 380 L800 420 L870 520 L940 600 L750 755 L700 690 L600 600 L520 505 L460 475 L430 300Z" fill="url(#gL3)"/>
<path d="M765 292 L778 268 L815 270 L850 300 L868 345 L855 400 L830 432 L800 420 L790 380Z" fill="#1b1b1b"/>
<path d="M530 45 L560 15 L610 14 L630 35 L625 70 L600 90 L545 75Z" fill="#e67836"/>
<ellipse cx="590" cy="30" rx="38" ry="14" transform="rotate(15 590 30)" fill="#f08a46"/>
<path d="M690 255 L705 235 L740 222 L780 240 L785 258 L765 295 L720 300Z" fill="#e67836"/>
<ellipse cx="745" cy="242" rx="38" ry="14" transform="rotate(15 745 242)" fill="#f08a46"/>
<path d="M700 320 L716 318 L766 455 L750 460Z" fill="#c05c25"/>
<path d="M700 560 L860 500 L940 600 L870 640Z" fill="#e07131" opacity=".5"/>
<!-- elbow ring -->
<path d="M485 103 L530 108 L590 135 L640 180 L665 240 L668 310 L650 380 L620 430 L580 465 L540 480 L490 478 L468 472 L505 420 L535 360 L555 300 L560 240 L550 180 L525 135Z" fill="#1c1c1c"/>
<path d="M605 232 L642 230 L632 330 L592 420 L560 447 L585 380 L600 310Z" fill="#2e2e2e"/>
<path d="M608 205 L645 203 L650 228 L612 232Z M528 445 L548 432 L572 462 L552 475Z" fill="#fff"/>
<!-- ===== link 2 ===== -->
<path d="M0 745 L60 600 L120 450 L170 330 L215 230 L250 170 L290 130 L340 105 L400 90 L450 92 L490 105 L525 135 L550 180 L560 240 L555 300 L535 360 L505 420 L470 470 L455 500 L440 540 L400 640 L360 760 L340 820 L320 880 L300 980 L284 1030 L270 1064 L300 1134 L310 1224 L300 1324 L270 1424 L225 1484 L130 1504 L0 1509Z" fill="url(#gL2)"/>
<path d="M0 745 L60 600 L120 450 L160 352 L175 360 L120 500 L60 660 L0 820Z" fill="#c45e27" opacity=".8"/>
<path d="M66 800 L140 640 L215 620 L240 640 L160 760 L104 800Z" fill="#c9622a" opacity=".45"/>
<path d="M150 490 L172 462 L245 505 L222 540Z" fill="none" stroke="#b85a26" stroke-width="3"/>
<path d="M470 100 Q545 170 520 330 Q500 420 455 490" fill="none" stroke="#c8632a" stroke-width="5" opacity=".7"/>
<path d="M0 900 L300 880 L284 1030 L270 1064 L300 1134 L310 1224 L300 1324 L270 1424 L225 1484 L130 1504 L0 1509Z" fill="#ec7e38" opacity=".75"/><path d="M70 1290 L250 1280 L285 1380 L225 1484 L130 1504 L60 1500Z" fill="#d96b2d" opacity=".7"/><path d="M66 800 L104 800 L98 1300 L62 1300Z" fill="#c45f28"/>
<path d="M0 1010 L60 980 L40 1300 L0 1330Z" fill="#f0803c" opacity=".8"/>
<!-- black band -->
<path d="M262 1050 L292 1075 L320 1150 L342 1260 L332 1360 L302 1450 L262 1494 L225 1484 L270 1424 L300 1324 L310 1224 L300 1134 L268 1059Z" fill="#1a1a1a"/>
<path d="M318 1268 L346 1262 L342 1305 L322 1330Z" fill="#1a1a1a"/>
<path d="M222 1484 L250 1469 L268 1492 L240 1507Z" fill="#fff"/>
<!-- ===== wrist ===== -->
<path d="M712 690 L730 640 L770 590 L820 560 L880 548 L915 570 L938 605 L900 612 L850 628 L800 660 L768 702 L752 758Z" fill="#1c1c1c"/>
<path d="M752 758 L768 702 L800 660 L850 628 L900 612 L938 605 L1000 650 L1100 760 L1180 870 L1197 910 L1190 960 L1165 994 L1150 1054 L945 1074 L940 1034 L920 1004 L880 974 L840 904 L790 824Z" fill="url(#gW)"/>
<path d="M775 762 L850 640 L870 655 L795 780Z" fill="#e87b39" stroke="#c8632a" stroke-width="2"/>
<path d="M1100 760 L1180 870 L1197 910 L1190 960 L1165 994 L1150 1000 L1140 960 L1130 880Z" fill="#d96c2e"/>
<path d="M985 758 L1050 775 L1095 830 L1112 895 L1102 950 L1062 992 L1000 1008 L940 1016 L920 1000 L935 880Z" fill="#1c1c1c"/><path d="M1040 800 Q1085 860 1075 940 Q1060 975 1020 990" fill="none" stroke="#303030" stroke-width="14"/>
<circle cx="935" cy="880" r="82" fill="#e77937" stroke="#c8632a" stroke-width="3"/>
<circle cx="935" cy="880" r="48" fill="#ea7d3a" stroke="#c8632a" stroke-width="3"/>
<circle cx="985" cy="725" r="13" fill="#fff"/><circle cx="866" cy="795" r="9" fill="#fff"/>
<!-- ===== B frame items ===== -->
<g transform="translate(0,804)">
<path d="M940 205 L1150 190 L1155 255 L945 270Z" fill="#e87a38"/>
<path d="M945 262 L1155 250 L1155 290 L1150 295 L1150 335 L1165 340 L1165 385 L1150 395 L1150 455 L970 462 L968 400 L945 390 L945 345 L958 340 L955 300 L945 295Z" fill="#2b2b2b"/>
<path d="M945 345 L1165 340 L1165 385 L1150 395 L968 400 L945 390Z" fill="#3d3d3d"/>
<path d="M968 400 L1150 395 L1150 455 L970 462Z" fill="#4b4b4b"/>
<path d="M955 300 L1150 295 L1150 303 L955 308Z" fill="#111"/>
<path d="M845 386 L945 382 L968 392 L968 400 L845 395Z" fill="#2e2e2e"/>
<circle cx="1018" cy="341" r="4" fill="#d00"/>
<!-- yellow -->
<path d="M985 460 L1135 448 L1150 470 L1235 468 L1240 505 L1215 515 L1200 550 L1150 560 L1140 575 L935 575 L915 540 L915 505 L935 480 L985 475Z" fill="#e6de48"/>
<path d="M985 460 L1135 448 L1140 490 L990 498Z" fill="#f1ea6a"/>
<path d="M990 498 L1140 490 L1128 548 L1000 552Z" fill="#d6ce3c"/>
<path d="M990 498 L1140 490 M1000 552 L1128 548 M935 480 L985 475 L990 560 M1150 470 L1150 560 M915 520 L990 515 M1150 512 L1215 515" fill="none" stroke="#8f8a20" stroke-width="2.500"/>
<circle cx="1018" cy="523" r="9" fill="#3a3820"/><circle cx="1052" cy="521" r="10" fill="#3a3820"/><circle cx="1088" cy="519" r="9" fill="#3a3820"/>
<circle cx="1010" cy="467" r="11" fill="none" stroke="#a09a28" stroke-width="2"/><circle cx="1050" cy="465" r="14" fill="none" stroke="#a09a28" stroke-width="2"/><circle cx="1092" cy="462" r="11" fill="none" stroke="#a09a28" stroke-width="2"/>
<!-- spindle -->
<path d="M900 588 L960 580 L1010 578 L1010 728 L905 720Z" fill="#b2b2b2"/>
<path d="M1010 578 L1220 575 L1225 710 L1120 735 L1010 728Z" fill="url(#gSp)"/>
<path d="M900 588 L960 580 L960 722 L905 720Z" fill="#a4a4a4"/>
<path d="M1225 600 L1275 600 Q1290 645 1275 690 L1225 690Z" fill="url(#gNose)"/>
<path d="M1060 588 v22 q8 8 14 0 M1140 586 v22 q8 8 14 0" fill="none" stroke="#777" stroke-width="3"/>
<path d="M950 728 L1120 735 L1090 745 L960 740Z" fill="#d8d8d8"/>
<path d="M1000 745 L1115 735 L1118 770 L1005 780Z" fill="#2a2a2a"/>
<!-- tool + arrows -->
<path d="M1288 640 L1440 638 L1440 656 L1288 657Z" fill="#c2c2cc"/>
<path d="M1292 645 L1352 644 L1352 636 L1385 647 L1352 659 L1352 651 L1292 652Z" fill="#7d7df0"/>
<path d="M1276 690 L1284 690 L1284 738 L1291 738 L1280 772 L1269 738 L1276 738Z" fill="#ee1515"/>
<!-- small bust -->
<path d="M1419.500 270 L1438.800 241 L1477.400 231.500 L1535.300 228.300 L1573.800 250.800 L1599.600 283 L1609.200 315 L1606 328 L1596.400 347.300 L1590 373 L1577 386 L1586.700 398.700 L1622 431 L1628.500 447 L1612.400 469.500 L1580.300 501.600 L1538.500 553 L1535.300 604.600 L1532 669 L1509.500 678.500 L1451.600 678.500 L1406.600 669 L1403.400 659 L1432.300 636.700 L1435.600 604.600 L1416.300 598 L1419.500 579 L1409.800 566 L1406.600 540 L1409.800 501.600 L1426 463 L1451.600 437.300 L1445.200 424.500 L1461.300 418 L1474 402 L1454.900 392.300 L1461.300 373 L1448.400 353.700 L1448.400 331.200 L1425 328Z" fill="#cdcde8"/>
<path d="M1419.500 270 L1438.800 241 L1477.400 231.500 L1535.300 228.300 L1573.800 250.800 L1599.600 283 L1609.200 315 L1606 328 L1596 347 L1590 373 L1577 386 L1560 380 L1548 345 L1500 330 L1425 328Z" fill="#f7f7fd"/>
<path d="M1448 331 L1500 330 L1548 345 L1558 385 L1520 412 L1474 402 L1455 392 L1461 373 L1448 354Z" fill="#e0e0f2"/>
<path d="M1500 345 L1540 352 L1548 385 L1520 405 L1495 395Z" fill="#f0f0fa"/>
<path d="M1548 345 L1575 350 L1590 373 L1577 386 L1560 392Z" fill="#b4b4d6"/>
<path d="M1445 424 L1478 438 L1470 470 L1440 520 L1425 575 L1410 566 L1407 540 L1410 502 L1426 463Z" fill="#a9a9ce"/>
<path d="M1478 438 L1520 420 L1560 400 L1586 399 L1622 431 L1628 447 L1612 469 L1580 501 L1545 545 L1500 580 L1470 580 L1480 520Z" fill="#dcdcf1"/>
<path d="M1545 425 L1590 410 L1618 436 L1606 465 L1570 500 L1540 530 L1530 480Z" fill="#f0f0fa"/>
<path d="M1425 575 L1440 520 L1470 470 L1480 520 L1470 580Z" fill="#c2c2e0"/>
<path d="M1416 598 L1419 579 L1470 582 L1538 553 L1535 605 L1436 612Z" fill="#a2a2c8"/>
<path d="M1436 612 L1535 605 L1532 669 L1509 678 L1452 678 L1407 669 L1403 659 L1432 637Z" fill="url(#gBust)"/>
<path d="M1405 660 Q1470 690 1532 668 L1532 669 L1509 678 L1452 678 L1407 669Z" fill="#a8a8cc"/>
<path d="M1500 612 L1535 608 L1532 668 L1505 672Z" fill="#b4b4d6"/>
<path d="M1387 327 L1450 320 L1470 322 L1609 324 L1609 330 L1470 331 L1440 334Z" fill="#19dede"/>
<path d="M1467 118 V325 M1478 135 V325" stroke="#30c8d0" stroke-width="3.500"/>
<path d="M1422 322 V282 M1430 322 V270 M1438 322 V262 M1446 322 V256 M1454 322 V252 M1462 322 V250 M1486 322 V258 M1494 322 V268" stroke="#19dede" stroke-width="3" opacity=".85"/>
<path d="M1422 282 Q1440 250 1478 246 Q1500 250 1510 275" fill="none" stroke="#19dede" stroke-width="2.500"/>
<rect x="1463" y="114" width="9" height="6" fill="#fff"/><rect x="1474" y="131" width="9" height="6" fill="#fff"/>
<path d="M1585 300 l8 12 l8 -4" stroke="#19dede" stroke-width="2.500" fill="none"/>
<!-- stock box -->
<path d="M1347 678 L1520 672 L1650 680 L1465 690Z" fill="#cfcfec"/>
<path d="M1347 678 L1465 690 L1465 908 L1435 905 L1435 852 L1347 845Z" fill="#b9b9dd"/>
<path d="M1465 690 L1650 680 L1650 900 L1465 908Z" fill="#dcdcf3"/>
<path d="M1465 690 L1580 770 L1650 680Z" fill="#e2e2f6"/>
<path d="M1465 908 L1580 770 L1650 900Z" fill="#d6d6ef"/>
<!-- vise -->
<path d="M1255 845 L1345 838 L1435 852 L1435 905 L1345 910 L1275 905 L1255 900Z" fill="#6b6b6b"/>
<path d="M1255 845 L1345 838 L1435 852 L1345 860Z" fill="#7d7d7d"/>
<path d="M1650 838 L1735 845 L1735 905 L1700 912 L1650 900Z" fill="#7b7b7b"/>
<path d="M1275 905 L1345 910 L1435 905 L1465 908 L1650 900 L1700 912 L1715 905 L1715 1015 L1335 1035 L1275 1020Z" fill="#9b9b9b"/>
<path d="M1275 905 L1335 912 L1335 1035 L1275 1020Z" fill="#848484"/>
<path d="M1335 990 L1715 962 L1715 1015 L1335 1035Z" fill="#a9a9a9"/>
<rect x="1355" y="922" width="45" height="28" fill="#6a6a6a"/>
<path d="M1495 905 L1590 902 L1590 945 L1495 948Z" fill="#8a8a8a"/>
<path d="M1497 922 v22" stroke="#1010e0" stroke-width="4"/><path d="M1535 910 l25 -8" stroke="#e01010" stroke-width="5"/>
<circle cx="1452" cy="942" r="6" fill="#555"/><circle cx="1300" cy="975" r="10" fill="#777"/>
<!-- turntable -->
<ellipse cx="1495" cy="1043" rx="198" ry="22" fill="#b5b5b5"/>
<ellipse cx="1495" cy="1038" rx="150" ry="14" fill="#d6d6d6"/>
<path d="M1298 1050 Q1495 1075 1692 1050 L1692 1138 Q1495 1170 1298 1138Z" fill="#232323"/>
</g>
<!-- ===== positioner lower (R3 frame) ===== -->
<g transform="translate(0,1554)">
<path d="M1620 415 Q1700 385 1790 440 Q1840 500 1845 620 L1850 965 L1205 965 L1232 900 L1480 850 L1500 760 L1575 720Z" fill="url(#gCream)"/>
<path d="M1828 470 L1880 465 L1897 510 L1892 580 L1850 622 L1840 560Z" fill="#e2ddc5"/>
<path d="M1790 440 Q1840 500 1845 620 L1850 965 L1800 965 L1800 600 Q1790 480 1740 420Z" fill="#dcd7be"/>
<path d="M1600 805 Q1570 850 1575 895 L1650 880 Q1650 840 1665 800Z" fill="#d5d0b7"/>
<path d="M1598 808 Q1568 850 1572 893" fill="none" stroke="#fff" stroke-width="5"/>
<path d="M1205 965 L1232 900 L1480 850 L1470 900 L1260 940Z" fill="#f3efdc"/>
<path d="M1620 420 L1700 470 L1740 580 L1712 690 L1640 730 L1575 715 L1575 480Z" fill="#d76b2d"/>
<path d="M1370 400 L1620 400 L1620 500 L1690 475 L1690 655 L1575 630 L1575 715 L1500 735 L1415 700 L1415 600 L1395 585 L1395 500 L1370 495Z" fill="url(#gOrP)"/>
<path d="M1620 500 L1690 475 L1690 655 L1575 630 L1575 520Z" fill="#d26729"/>
<path d="M1415 600 L1480 612 L1480 728 L1415 700Z" fill="#cc652b"/>
<path d="M1480 612 L1575 600 L1575 715 L1500 735 L1480 728Z" fill="#e1732f"/>
<path d="M1370 495 L1395 500 L1430 520 L1575 520 L1620 500 L1620 400 L1370 400Z" fill="url(#gOrP)"/>
<path d="M1490 905 l6 22 h-12z" fill="#1010d0"/>
</g>
<!-- cursor (B frame) -->
<g transform="translate(1603,1600) scale(3)"><path d="M0.500 0.500 V16 L4 12.500 L6.500 18.500 L9 17.500 L6.500 11.500 H11.500Z" fill="#fff" stroke="#000" stroke-width="1"/></g>
</g>
</svg>
</body></html>
